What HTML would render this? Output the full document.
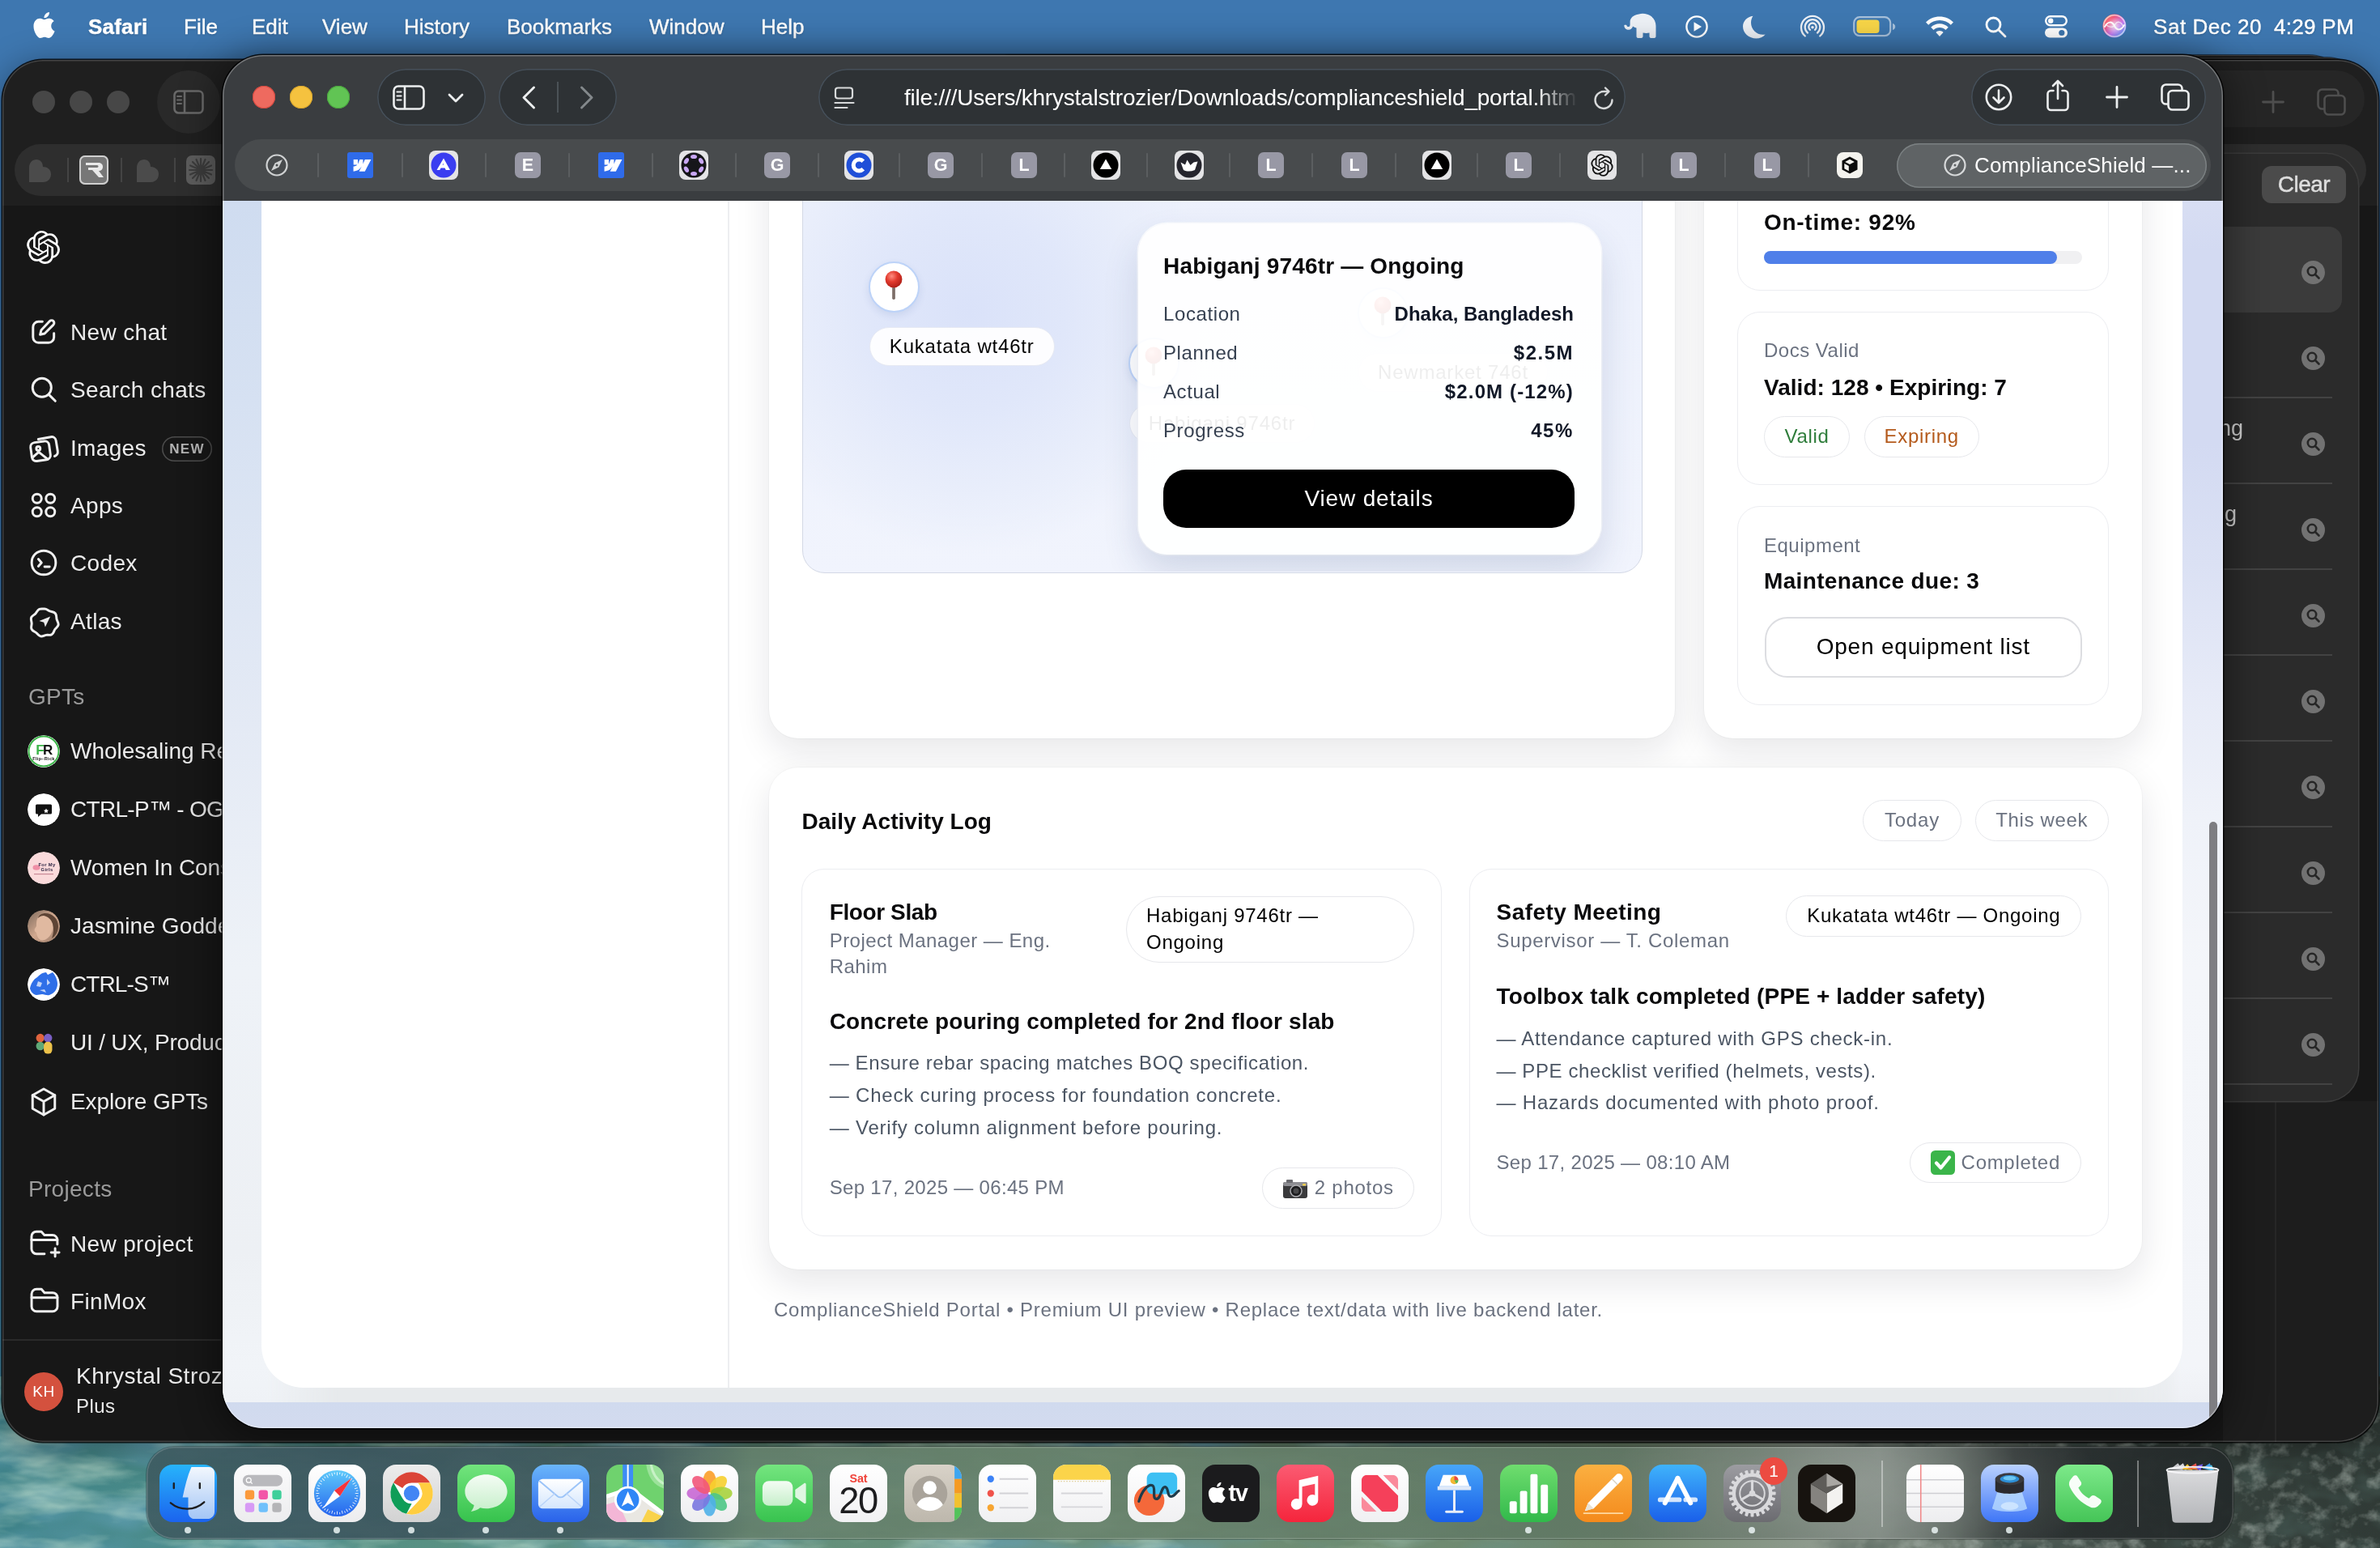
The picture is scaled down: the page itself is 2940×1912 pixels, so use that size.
<!DOCTYPE html>
<html lang="en">
<head>
<meta charset="utf-8">
<title>ComplianceShield — Safari</title>
<style>
*{box-sizing:border-box;margin:0;padding:0}
html,body{width:2940px;height:1912px;overflow:hidden;background:#3e77b0}
body{position:relative;font-family:"Liberation Sans",sans-serif;color:#fff;-webkit-font-smoothing:antialiased}
.abs{position:absolute}
#menubar,#gpt,#saf,#dock{will-change:transform}
svg{display:block;overflow:visible}
/* ---------- wallpaper ---------- */
#wall{position:absolute;left:0;top:0;width:2940px;height:1912px;
 background:
  linear-gradient(180deg,#3e77b0 0,#3e77b0 1200px,#3f7f9a 1700px,#3f8088 1912px)}
/* ---------- menubar ---------- */
#menubar{position:absolute;left:0;top:0;width:2940px;height:66px;font-size:26px;color:#fff}
#menubar span{position:absolute;top:17px;line-height:32px;white-space:pre;text-shadow:0 1px 3px rgba(0,0,0,.22);-webkit-text-stroke:.4px #fff}
/* ---------- chatgpt window ---------- */
#gpt{position:absolute;left:3px;top:74px;width:2935px;height:1707px;border-radius:50px;background:#171717;
 box-shadow:0 0 0 1.500px rgba(0,0,0,.8),0 8px 40px 4px rgba(0,0,0,.35);overflow:hidden}
#gpt .titlebar{position:absolute;left:0;top:0;width:100%;height:180px;background:#1f1f1f}

/* chatgpt */
#gpt .gtl{position:absolute;top:38px;width:28px;height:28px;border-radius:50%;background:#474747}
#gpt .gtab{position:absolute;left:15px;top:104px;width:2905px;height:64px;border-radius:32px;background:#2e2e2e}
#gpt .row{position:absolute;left:0;height:48px;width:272px;font-size:28px;line-height:48px;color:#ececec;letter-spacing:.34px;white-space:pre}
#gpt .row>svg{position:absolute;left:35px;top:7px;transform:scale(1.1);transform-origin:50% 50%}
#gpt .row b{position:absolute;left:84px;top:-.5px;font-weight:400}
#gpt .row .av{position:absolute;left:31px;top:4px;width:40px;height:40px;border-radius:50%;overflow:hidden}
#gpt .lbl{position:absolute;left:32px;font-size:28px;line-height:34px;color:#9b9b9b;letter-spacing:.3px}
#gpt .sico{position:absolute;left:2840px;width:29px;height:29px;border-radius:50%;background:#727272}
#gpt .sdiv{position:absolute;left:2700px;width:178px;height:2px;background:#434343}
/* ---------- safari window ---------- */
#saf{position:absolute;left:275px;top:68px;width:2471px;height:1696px;border-radius:50px;background:#3a3d40;
 box-shadow:0 0 0 1.500px rgba(0,0,0,.85),0 6px 46px 8px rgba(0,0,0,.42);overflow:hidden}
#saf .chrome{position:absolute;left:0;top:0;width:100%;height:180px;background:#3a3d40}
#saf .page{position:absolute;left:0;top:180px;width:100%;height:1516px;overflow:hidden;color:#000;background:linear-gradient(180deg,#e7eaec 0,#e7eaec 1484px,#d0daee 1484px,#d3dbef 1516px)}

/* safari chrome */
#saf .tl{position:absolute;top:38px;width:28px;height:28px;border-radius:50%}
#saf .pill{position:absolute;top:17px;height:70px;border-radius:35px;background:#2e3235;box-shadow:inset 0 0 0 1.5px #46505a}
#saf .tabbar{position:absolute;left:15px;top:104px;width:2441px;height:64px;border-radius:32px;background:#484b4d}
#saf .tabbar i{position:absolute;top:17px;width:2px;height:30px;background:#5b5e60;border-radius:1px}
#saf .fav{position:absolute;top:16px;width:32px;height:32px;border-radius:7px;font-style:normal;font-weight:700;font-size:21.500px;line-height:33px;text-align:center;color:#fff;background:#9898a5}
#saf .favw{position:absolute;top:14px;width:36px;height:36px;border-radius:8px;background:#e4e4e6}
#saf .acttab{position:absolute;left:2068px;top:109px;width:383px;height:55px;border-radius:28px;background:#5f6365;box-shadow:inset 0 0 0 1.5px #7b8082;font-size:26px;line-height:55px;color:#fff;white-space:pre}
.ring{position:absolute;left:0;top:0;width:100%;height:100%;border-radius:50px;pointer-events:none}
/* ---------- dock ---------- */
#dock{position:absolute;left:181px;top:1787px;width:2578px;height:114px;border-radius:34px;
 background:radial-gradient(300px 130px at 2110px 45px,rgba(165,172,166,.5) 0,rgba(120,132,124,0) 100%),linear-gradient(90deg,rgba(62,92,98,.94) 0,rgba(60,86,94,.94) 12%,rgba(66,92,94,.94) 24%,rgba(100,128,108,.93) 29%,rgba(104,130,108,.93) 45%,rgba(96,120,100,.93) 68%,rgba(104,118,106,.94) 78%,rgba(122,132,125,.94) 83%,rgba(92,102,96,.95) 86%,rgba(44,50,50,.97) 89.500%,rgba(36,42,42,.97) 100%);
 box-shadow:inset 0 0 0 1.5px rgba(255,255,255,.16),0 0 0 1px rgba(0,0,0,.25)}
</style>
</head>
<body>
<div id="wall"></div>
<svg class="abs" style="left:0;top:1700px" width="2940" height="212" viewBox="0 0 2940 212" preserveAspectRatio="none">
  <defs>
    <linearGradient id="wg" x1="0" y1="0" x2="1" y2="0">
      <stop offset="0" stop-color="#3f838a"/><stop offset=".07" stop-color="#4a8b88"/><stop offset=".2" stop-color="#5a9182"/><stop offset=".45" stop-color="#6b8f76"/><stop offset=".68" stop-color="#71896f"/><stop offset=".76" stop-color="#8e9a8d"/><stop offset=".84" stop-color="#66726a"/><stop offset=".9" stop-color="#38433e"/><stop offset="1" stop-color="#303a36"/>
    </linearGradient>
    <filter id="water" x="0" y="0" width="100%" height="100%"><feTurbulence type="fractalNoise" baseFrequency="0.009 0.03" numOctaves="4" seed="7" result="n"/><feColorMatrix in="n" type="matrix" values="0 0 0 0 .56  0 0 0 0 .76  0 0 0 0 .63  1.700 0 0 0 -.70"/></filter>
    <filter id="water2" x="0" y="0" width="100%" height="100%"><feTurbulence type="fractalNoise" baseFrequency="0.007 0.02" numOctaves="3" seed="23" result="n"/><feColorMatrix in="n" type="matrix" values="0 0 0 0 .13  0 0 0 0 .36  0 0 0 0 .50  0 1.700 0 0 -.66"/></filter>
    <filter id="rock" x="0" y="0" width="100%" height="100%"><feTurbulence type="fractalNoise" baseFrequency="0.045 0.05" numOctaves="4" seed="11" result="n"/><feColorMatrix in="n" type="matrix" values="0 0 0 0 .42  0 0 0 0 .48  0 0 0 0 .44  1.600 0 0 0 -.780"/></filter>
    <filter id="rock2" x="0" y="0" width="100%" height="100%"><feTurbulence type="fractalNoise" baseFrequency="0.02 0.03" numOctaves="3" seed="5" result="n"/><feColorMatrix in="n" type="matrix" values="0 0 0 0 .05  0 0 0 0 .08  0 0 0 0 .07  0 2.400 0 0 -1.050"/></filter>
    <linearGradient id="fadeL" x1="0" y1="0" x2="1" y2="0"><stop offset="0" stop-color="#fff"/><stop offset=".75" stop-color="#fff"/><stop offset="1" stop-color="#000"/></linearGradient>
    <mask id="mL"><rect width="2000" height="212" fill="url(#fadeL)"/></mask>
    <linearGradient id="fadeR" x1="0" y1="0" x2="1" y2="0"><stop offset="0" stop-color="#000"/><stop offset=".3" stop-color="#fff"/><stop offset="1" stop-color="#fff"/></linearGradient>
    <mask id="mR"><rect x="2200" width="740" height="212" fill="url(#fadeR)"/></mask>
  </defs>
  <rect width="2940" height="212" fill="url(#wg)"/>
  <g mask="url(#mL)"><rect width="2000" height="212" filter="url(#water2)"/><rect width="2000" height="212" filter="url(#water)"/></g>
  <g mask="url(#mR)"><rect x="2200" width="740" height="212" filter="url(#rock2)"/><rect x="2200" width="740" height="212" filter="url(#rock)"/></g>
</svg>
<!-- MENUBAR -->
<div id="menubar">
  <svg class="abs" style="left:41px;top:15px" width="27" height="32" viewBox="0 0 814 1000"><path fill="#fff" d="M788 341c-6 4-108 62-108 190 0 148 130 201 134 202-1 3-21 72-69 142-43 62-88 124-156 124s-86-40-165-40c-77 0-104 41-167 41s-106-57-156-127C43 790 0 663 0 542c0-194 126-297 250-297 66 0 121 43 162 43 39 0 101-46 176-46 28 0 130 3 197 99zM554 159c31-37 53-88 53-139 0-7-1-14-2-20-50 2-110 33-146 75-28 32-55 83-55 135 0 8 1 16 2 18 3 1 8 2 13 2 45 0 102-30 135-71z"/></svg>
  <span style="left:109px;font-weight:700;letter-spacing:.2px">Safari</span>
  <span style="left:227px">File</span>
  <span style="left:311px">Edit</span>
  <span style="left:398px">View</span>
  <span style="left:499px">History</span>
  <span style="left:626px">Bookmarks</span>
  <span style="left:802px">Window</span>
  <span style="left:940px">Help</span>
  <!-- status icons -->
  <svg class="abs" style="left:2005px;top:16px" width="42" height="32" viewBox="0 0 42 32"><path fill="#edf1f6" d="M19.500 1.500c3.500-1 7-.8 10.500.3 6.500 2 10.500 7.500 10.500 14.200v13c0 1.100-.9 2-2 2h-4c-1.100 0-2-.9-2-2v-4.500c-2.600.6-5.400.6-8 0V29c0 1.100-.9 2-2 2h-4c-1.100 0-2-.9-2-2V18.500c-1.700-.3-3.200-1-4.500-2-.6 2.600-2.600 4.300-5.200 4.300-2.900 0-5.300-2.200-5.500-5.100 0-.6.400-1 1-1h1.200c.5 0 .9.300 1 .8.200.9 1 1.600 2 1.600 1.300 0 2.100-1 2.100-2.600V11c0-4.800 4-8.400 10.900-9.500z"/></svg>
  <svg class="abs" style="left:2081px;top:18px" width="30" height="30" viewBox="0 0 30 30"><circle cx="15" cy="15" r="12.6" fill="none" stroke="#fff" stroke-width="2.4"/><path fill="#fff" d="M11.5 9.2v11.6l9.6-5.8z"/></svg>
  <svg class="abs" style="left:2152px;top:18px" width="30" height="30" viewBox="0 0 30 30"><path fill="#edf1f6" d="M13.500 1.800c-1.600 2.400-2.500 5.200-2.500 8.200 0 8.200 6.600 14.800 14.800 14.800 1 0 2-.1 2.900-.3C26 27.800 21.900 29.500 17.500 29.500 8.400 29.500 1 22.900 1 14.800 1 8.200 6.300 2.700 13.500 1.800z"/></svg>
  <svg class="abs" style="left:2223px;top:17px" width="32" height="32" viewBox="0 0 32 32" fill="none" stroke="#edf1f6" stroke-width="2.300" stroke-linecap="round"><path d="M6.800 27.500A14 14 0 1 1 25.200 27.500"/><path d="M10 23.600A9.300 9.300 0 1 1 22 23.600"/><path d="M13 19.800A4.700 4.700 0 1 1 19 19.800"/><circle cx="16" cy="16.800" r="1.800" fill="#edf1f6" stroke="none"/></svg>
  <svg class="abs" style="left:2289px;top:20px" width="54" height="26" viewBox="0 0 54 26"><rect x="1.200" y="1.200" width="45" height="23" rx="7" fill="none" stroke="rgba(255,255,255,.55)" stroke-width="2.2"/><rect x="4.500" y="4.500" width="28" height="16.500" rx="4" fill="#f8d648"/><path d="M49 9v8c2-.6 3.200-2 3.200-4S51 9.600 49 9z" fill="rgba(255,255,255,.55)"/></svg>
  <svg class="abs" style="left:2378px;top:19px" width="36" height="27" viewBox="0 0 36 27"><path fill="#fff" d="M18 1.500c6.600 0 12.600 2.600 17 7l-3.200 3.300C28.300 8.200 23.400 6 18 6S7.700 8.200 4.200 11.800L1 8.500c4.400-4.400 10.400-7 17-7zm0 8.800c4.200 0 8 1.700 10.800 4.500l-3.300 3.300c-1.900-2-4.600-3.200-7.500-3.200s-5.600 1.200-7.500 3.200l-3.300-3.300c2.800-2.800 6.600-4.500 10.800-4.500zm0 8.700c1.800 0 3.400.7 4.600 1.900L18 26l-4.600-5.100c1.200-1.200 2.800-1.900 4.600-1.900z"/></svg>
  <svg class="abs" style="left:2451px;top:19px" width="28" height="28" viewBox="0 0 28 28" fill="none" stroke="#fff" stroke-width="2.800" stroke-linecap="round"><circle cx="11.500" cy="11.500" r="8.500"/><path d="M18 18l8 8"/></svg>
  <svg class="abs" style="left:2526px;top:19px" width="28" height="28" viewBox="0 0 28 28"><rect x="1.200" y="1.200" width="25.600" height="11" rx="5.500" fill="none" stroke="#fff" stroke-width="2.400"/><circle cx="7.200" cy="6.700" r="3.200" fill="#fff"/><rect x="0" y="15.500" width="28" height="12" rx="6" fill="#fff"/><circle cx="20.800" cy="21.500" r="3.600" fill="#3e77b0"/></svg>
  <svg class="abs" style="left:2597px;top:17px" width="30" height="30" viewBox="0 0 30 30"><defs><linearGradient id="siri" x1="0" y1="0" x2="1" y2="1"><stop offset="0" stop-color="#ffa45c"/><stop offset=".3" stop-color="#f4567c"/><stop offset=".6" stop-color="#c47af0"/><stop offset="1" stop-color="#3fb0ff"/></linearGradient><radialGradient id="siri2" cx=".5" cy=".5" r=".5"><stop offset="0" stop-color="#fff" stop-opacity=".75"/><stop offset="1" stop-color="#fff" stop-opacity="0"/></radialGradient></defs><circle cx="15" cy="15" r="14.500" fill="url(#siri)"/><circle cx="15" cy="15" r="11" fill="url(#siri2)"/><circle cx="15" cy="15" r="13.300" fill="none" stroke="rgba(255,255,255,.6)" stroke-width="1.500"/><path d="M3 16c4-7 9-7 12-1s8 6 12-1" fill="none" stroke="#fff" stroke-width="2" stroke-linecap="round"/><path d="M4 13c5 5 10 4 12 0s7-4 10 3" fill="none" stroke="rgba(255,255,255,.7)" stroke-width="1.400" stroke-linecap="round"/></svg>
  <span style="left:2660px;letter-spacing:.55px">Sat Dec 20</span>
  <span style="left:2809px;letter-spacing:.3px">4:29 PM</span>
</div>

<!-- STACKED WINDOWS BEHIND -->
<div class="abs" style="left:1200px;top:68px;width:1702px;height:400px;border-radius:50px;background:#1b1b1b;box-shadow:0 0 0 1px rgba(0,0,0,.5),inset 0 1.500px 0 rgba(255,255,255,.16)"></div>
<div class="abs" style="left:1200px;top:71px;width:1724px;height:400px;border-radius:50px;background:#1d1d1d;box-shadow:0 0 0 1px rgba(0,0,0,.5),inset 0 1.500px 0 rgba(255,255,255,.16)"></div>
<!-- CHATGPT WINDOW -->
<div id="gpt">
  <div class="titlebar">
    <div class="gtl" style="left:37px"></div><div class="gtl" style="left:83px"></div><div class="gtl" style="left:129px"></div>
    <div class="abs" style="left:191px;top:13px;width:78px;height:78px;border-radius:50%;background:#292929"></div>
    <svg class="abs" style="left:211px;top:37px" width="38" height="30" viewBox="0 0 38 30" fill="none" stroke="#686868" stroke-width="2.600"><rect x="1.500" y="1.500" width="35" height="27" rx="5"/><path d="M14 1.500v27"/><path d="M5 8h5M5 12.500h5M5 17h5" stroke-width="2" stroke-linecap="round"/></svg>
    <div class="gtab">
      <svg class="abs" style="left:15px;top:17px" width="32" height="32" viewBox="0 0 32 32"><path fill="#4b4b4b" d="M3 30V12C3 6 7 2 12 2s8 4 8 9c5 0 10 3 10 9s-4 10-10 10z"/></svg>
      <div class="abs" style="left:65px;top:17px;width:2px;height:30px;background:#444"></div>
      <div class="abs" style="left:80px;top:14px;width:36px;height:36px;border-radius:7px;background:#777;box-shadow:inset 0 0 0 2px #cfcfcf"><svg width="36" height="36" viewBox="0 0 36 36"><path fill="#e9e9e9" d="M8 9h15c4 0 6 2 6 5s-2 5-5 5l6 8h-6l-8-9h-5v-3h11c2 0 2-3 0-3H8z"/></svg></div>
      <div class="abs" style="left:131px;top:17px;width:2px;height:30px;background:#444"></div>
      <svg class="abs" style="left:148px;top:17px" width="32" height="32" viewBox="0 0 32 32"><path fill="#4b4b4b" d="M3 30V12C3 6 7 2 12 2s8 4 8 9c5 0 10 3 10 9s-4 10-10 10z"/></svg>
      <div class="abs" style="left:197px;top:17px;width:2px;height:30px;background:#444"></div>
      <div class="abs" style="left:212px;top:14px;width:36px;height:36px;border-radius:7px;background:#5c5c5c"><svg width="36" height="36" viewBox="0 0 36 36" stroke="#3c3c3c" stroke-width="2.200" stroke-linecap="round"><path d="M18 4v28M4 18h28M8 8l20 20M28 8L8 28M12.500 5l11 26M23.500 5l-11 26M5 12.500l26 11M5 23.500l26-11"/></svg></div>
    </div>
    <div class="abs" style="left:2560px;top:13px;width:358px;height:70px;border-radius:35px;background:#262626"></div>
    <svg class="abs" style="left:2791px;top:38px" width="28" height="28" viewBox="0 0 28 28" fill="none" stroke="#4e4e4e" stroke-width="2.800" stroke-linecap="round"><path d="M14 1.500v25M1.500 14h25"/></svg>
    <svg class="abs" style="left:2859px;top:35px" width="36" height="34" viewBox="0 0 36 34" fill="none" stroke="#4e4e4e" stroke-width="2.600" stroke-linejoin="round"><rect x="9.500" y="9" width="25" height="23.500" rx="5"/><path d="M9.500 25.500H6.500a5 5 0 01-5-5v-14a5 5 0 015-5h15a5 5 0 015 5V9"/></svg>
  </div>
  <svg class="abs" style="left:30px;top:211px" width="41" height="41" viewBox="0 0 24 24"><path fill="#fff" d="M22.2819 9.8211a5.9847 5.9847 0 0 0-.5157-4.9108 6.0462 6.0462 0 0 0-6.5098-2.9A6.0651 6.0651 0 0 0 4.9807 4.1818a5.9847 5.9847 0 0 0-3.9977 2.9 6.0462 6.0462 0 0 0 .7427 7.0966 5.98 5.98 0 0 0 .511 4.9107 6.051 6.051 0 0 0 6.5146 2.9001A5.9847 5.9847 0 0 0 13.2599 24a6.0557 6.0557 0 0 0 5.7718-4.2058 5.9894 5.9894 0 0 0 3.9977-2.9001 6.0557 6.0557 0 0 0-.7475-7.0729zm-9.022 12.6081a4.4755 4.4755 0 0 1-2.8764-1.0408l.1419-.0804 4.7783-2.7582a.7948.7948 0 0 0 .3927-.6813v-6.7369l2.02 1.1686a.071.071 0 0 1 .038.052v5.5826a4.504 4.504 0 0 1-4.4945 4.4944zm-9.6607-4.1254a4.4708 4.4708 0 0 1-.5346-3.0137l.142.0852 4.783 2.7582a.7712.7712 0 0 0 .7806 0l5.8428-3.3685v2.3324a.0804.0804 0 0 1-.0332.0615L9.74 19.9502a4.4992 4.4992 0 0 1-6.1408-1.6464zM2.3408 7.8956a4.485 4.485 0 0 1 2.3655-1.9728V11.6a.7664.7664 0 0 0 .3879.6765l5.8144 3.3543-2.0201 1.1685a.0757.0757 0 0 1-.071 0l-4.8303-2.7865A4.504 4.504 0 0 1 2.3408 7.872zm16.5963 3.8558L13.1038 8.364 15.1192 7.2a.0757.0757 0 0 1 .071 0l4.8303 2.7913a4.4944 4.4944 0 0 1-.6765 8.1042v-5.6772a.79.79 0 0 0-.407-.667zm2.0107-3.0231l-.142-.0852-4.7735-2.7818a.7759.7759 0 0 0-.7854 0L9.409 9.2297V6.8974a.0662.0662 0 0 1 .0284-.0615l4.8303-2.7866a4.4992 4.4992 0 0 1 6.6802 4.66zM8.3065 12.863l-2.02-1.1638a.0804.0804 0 0 1-.038-.0567V6.0742a4.4992 4.4992 0 0 1 7.3757-3.4537l-.142.0805L8.704 5.459a.7948.7948 0 0 0-.3927.6813zm1.0976-2.3654l2.602-1.4998 2.6069 1.4998v2.9994l-2.5974 1.4997-2.6067-1.4997Z"/></svg>
  <div class="row" style="top:313px"><svg width="32" height="32" viewBox="0 0 32 32" fill="none" stroke="#f0f0f0" stroke-width="2.700" stroke-linecap="round" stroke-linejoin="round"><path d="M14.500 4.500H10a6 6 0 00-6 6V22a6 6 0 006 6h11.500a6 6 0 006-6v-4.500"/><path d="M22.800 3.800a2.900 2.900 0 014.100 4.100L17 17.800l-5 1.200 1.200-5z"/></svg><b>New chat</b></div>
  <div class="row" style="top:384px"><svg width="32" height="32" viewBox="0 0 32 32" fill="none" stroke="#f0f0f0" stroke-width="2.700" stroke-linecap="round" stroke-linejoin="round"><circle cx="14" cy="14" r="10.500"/><path d="M22 22l7 7"/></svg><b>Search chats</b></div>
  <div class="row" style="top:456px"><svg width="34" height="34" viewBox="0 0 34 34" fill="none" stroke="#f0f0f0" stroke-width="2.700" stroke-linecap="round" stroke-linejoin="round"><rect x="2" y="9.500" width="21" height="21" rx="5" transform="rotate(-8 12 20)"/><path d="M10 6.500l14-2.500a5 5 0 015.800 4l2 12a5 5 0 01-3.500 5.600"/><circle cx="10" cy="17" r="2.200"/><path d="M3.500 27l7-6 10 8"/></svg><b>Images</b><span style="position:absolute;left:197px;top:9px;width:62px;height:31px;border-radius:16px;box-shadow:inset 0 0 0 1.500px #4d4d4d;font-size:17px;line-height:31px;text-align:center;color:#b4b4b4;font-weight:700;letter-spacing:1.200px">NEW</span></div>
  <div class="row" style="top:527px"><svg width="32" height="32" viewBox="0 0 32 32" fill="none" stroke="#f0f0f0" stroke-width="2.700" stroke-linecap="round" stroke-linejoin="round"><circle cx="8.500" cy="8.500" r="5"/><circle cx="23.500" cy="8.500" r="5"/><circle cx="8.500" cy="23.500" r="5"/><circle cx="23.500" cy="23.500" r="5"/></svg><b>Apps</b></div>
  <div class="row" style="top:598px"><svg width="32" height="32" viewBox="0 0 32 32" fill="none" stroke="#f0f0f0" stroke-width="2.700" stroke-linecap="round" stroke-linejoin="round"><path d="M16 2.500c7.500 0 13.500 5.500 13.500 13.500S23.500 29.500 16 29.500 2.500 24 2.500 16 8.500 2.500 16 2.500z"/><path d="M10 12l3.500 4-3.500 4M17 20.500h5.500"/></svg><b>Codex</b></div>
  <div class="row" style="top:670px"><svg width="34" height="34" viewBox="0 0 34 34" fill="none" stroke="#f0f0f0" stroke-width="2.700" stroke-linecap="round" stroke-linejoin="round"><path d="M17 2.500c2.500 0 4 1.800 6 2.600s4.600.6 6.200 2.600.9 4.300 1.500 6.500 2.300 4 1.800 6.300-2.700 3.300-3.900 5.200-1.400 4.400-3.500 5.600-4.200.2-6.300.6-3.900 2-6.200 1.400-3.300-2.800-5.100-4.100-4.200-1.900-5.100-4.100.3-4.200.2-6.400S1.200 14 2.200 12s3.400-2.700 4.800-4.300 2-4.100 4.200-4.900 3.400-.3 5.800-.3z"/><path fill="#ececec" stroke="none" d="M23.500 11L11 16.200l5.300 1.500 1.500 5.300z"/></svg><b>Atlas</b></div>
  <div class="lbl" style="top:770px">GPTs</div>
  <div class="row" style="top:830px"><div class="av"><svg width="40" height="40" viewBox="0 0 40 40"><circle cx="20" cy="20" r="20" fill="#fff"/><circle cx="20" cy="20" r="18.500" fill="none" stroke="#3db54a" stroke-width="2"/><text x="20" y="24" font-size="17" font-weight="700" text-anchor="middle" fill="#111" font-family="Liberation Sans,sans-serif" letter-spacing="-1.500"><tspan fill="#3db54a">F</tspan>R</text><text x="20" y="31" font-size="5.500" font-weight="700" text-anchor="middle" fill="#111" font-family="Liberation Sans,sans-serif">Flip–Rick</text></svg></div><b style="letter-spacing:0px">Wholesaling Real Estate</b></div>
  <div class="row" style="top:902px"><div class="av"><svg width="40" height="40" viewBox="0 0 40 40"><circle cx="20" cy="20" r="20" fill="#fff"/><path fill="#111" d="M11.500 13.500h17a1.500 1.500 0 011.500 1.500v9a1.500 1.500 0 01-1.500 1.500H17l-4 3.500v-3.500h-1.500A1.500 1.500 0 0110 24v-9a1.500 1.500 0 011.500-1.500z"/><path fill="#fff" d="M23 18.500l1 2 2 .3-1.500 1.400.4 2-1.900-1-1.900 1 .4-2-1.500-1.400 2-.3z"/></svg></div><b style="letter-spacing:-0.7px">CTRL-P™ - OG Prompt</b></div>
  <div class="row" style="top:974px"><div class="av"><svg width="40" height="40" viewBox="0 0 40 40"><circle cx="20" cy="20" r="20" fill="#fadadb"/><ellipse cx="11" cy="19.500" rx="4.500" ry="3.200" fill="#ef8fa6"/><text x="24" y="18" font-size="5.800" font-weight="700" text-anchor="middle" fill="#2b2342" font-family="Liberation Sans,sans-serif">For My</text><text x="24" y="24" font-size="5.800" font-weight="700" text-anchor="middle" fill="#2b2342" font-family="Liberation Sans,sans-serif">Girls</text><rect x="8" y="27" width="24" height="1.200" fill="#c98b98"/></svg></div><b style="letter-spacing:-0.1px">Women In Construction</b></div>
  <div class="row" style="top:1046px"><div class="av"><svg width="40" height="40" viewBox="0 0 40 40"><defs><linearGradient id="jas" x1="0" y1="0" x2="1" y2="1"><stop offset="0" stop-color="#7d6a5c"/><stop offset=".5" stop-color="#cfa78e"/><stop offset="1" stop-color="#9b7b69"/></linearGradient></defs><circle cx="20" cy="20" r="20" fill="url(#jas)"/><path fill="#e0b9a0" d="M14 8c7-4 16 0 17 8s-1 16-8 20-11-1-12-8c-2-1-3-3-2-5l2-3c0-5 0-9 3-12z"/><path fill="#5d4435" d="M22 4c9 0 16 7 16 16 0 6-3 12-8 15 2-6 3-12 1-18s-6-9-11-10c-3 0-5 1-7 3 1-4 5-6 9-6z"/></svg></div><b style="letter-spacing:0.1px">Jasmine Goddess</b></div>
  <div class="row" style="top:1118px"><div class="av"><svg width="40" height="40" viewBox="0 0 40 40"><circle cx="20" cy="20" r="20" fill="#fff"/><path fill="#2f6fe8" d="M3 25c1-6 4-11 9-14 2-2 6-6 11-6l2 3 6-3c3 3 6 9 6 14 0 7-4 12-10 14-3 1-6-1-9-1s-7 2-10 0-4-4-5-7z"/><path fill="#fff" d="M13 16l5 2-2 5-5-1zM24 13l4 5-4 3zM15 27l6-1 2 4z" opacity=".7"/></svg></div><b style="letter-spacing:-0.9px">CTRL-S™</b></div>
  <div class="row" style="top:1190px"><svg style="left:41px;top:12px;transform:none" width="21" height="26" viewBox="0 0 24 30"><circle cx="6.500" cy="7" r="6" fill="#e0643e"/><circle cx="17.500" cy="7" r="6" fill="#7a5fc4"/><circle cx="6.500" cy="18.500" r="6" fill="#5fa877"/><rect x="11.500" y="12.500" width="12" height="17" rx="5.500" fill="#ecc24a"/></svg><b style="letter-spacing:-0.2px">UI / UX, Product Design</b></div>
  <div class="row" style="top:1263px"><svg width="32" height="34" viewBox="0 0 32 34" fill="none" stroke="#f0f0f0" stroke-width="2.700" stroke-linecap="round" stroke-linejoin="round"><path d="M16 2.500l12.500 7v15L16 31.500l-12.500-7v-15z"/><path d="M3.500 9.500L16 16.500l12.500-7M16 16.500v15"/></svg><b style="letter-spacing:-0.1px">Explore GPTs</b></div>
  <div class="lbl" style="top:1378px">Projects</div>
  <div class="row" style="top:1439px"><svg width="36" height="32" viewBox="0 0 36 32" fill="none" stroke="#f0f0f0" stroke-width="2.700" stroke-linecap="round" stroke-linejoin="round"><path d="M17 27.500H8a5.500 5.500 0 01-5.500-5.500V8A5.500 5.500 0 018 2.500h5.500l3.500 4h9A5.500 5.500 0 0131.500 12v5"/><path d="M2.500 12h29"/><path d="M29 21.500v9M24.500 26h9"/></svg><b>New project</b></div>
  <div class="row" style="top:1510px"><svg width="34" height="30" viewBox="0 0 34 30" fill="none" stroke="#f0f0f0" stroke-width="2.700" stroke-linecap="round" stroke-linejoin="round"><path d="M2.500 8A5.500 5.500 0 018 2.500h5.500l3.500 4h9A5.500 5.500 0 0131.500 12v10a5.500 5.500 0 01-5.500 5.500H8A5.500 5.500 0 012.500 22z"/><path d="M2.500 12h29"/></svg><b>FinMox</b></div>
  <div class="abs" style="left:0;top:1580px;width:272px;height:2px;background:#2a2a2a"></div>
  <div class="abs" style="left:27px;top:1621px;width:48px;height:48px;border-radius:50%;background:#d4513e;color:#fff;font-size:19px;line-height:48px;text-align:center;letter-spacing:.5px">KH</div>
  <div class="abs" style="left:91px;top:1609px;font-size:28px;line-height:34px;color:#ececec;letter-spacing:.5px;white-space:pre">Khrystal Strozier</div>
  <div class="abs" style="left:91px;top:1648px;font-size:24px;line-height:30px;color:#ececec;letter-spacing:.4px">Plus</div>
  <div class="abs" style="left:2743px;top:1286px;width:195px;height:430px;background:#1d1d1d"></div>
  <div class="abs" style="left:2807px;top:1286px;width:2px;height:430px;background:#262626"></div>
  <div class="abs" style="left:2500px;top:116px;width:2410px;margin-left:-2000px;height:1170px;border-radius:40px;background:#2b2b2b;box-shadow:0 0 0 1.500px #3c3c3c"></div>
  <div class="abs" style="left:2700px;top:206px;width:190px;height:106px;border-radius:16px;background:#3b3b3b"></div>
  <div class="abs" style="left:2791px;top:131px;width:104px;height:46px;border-radius:12px;background:#4b4b4b;font-size:28px;line-height:46px;text-align:center;color:#dedede;letter-spacing:-.5px;-webkit-text-stroke:.5px #dedede">Clear</div>
  <div class="abs" style="left:2738px;top:438px;font-size:27px;line-height:34px;color:#d0d0d0">ng</div>
  <div class="abs" style="left:2745px;top:544px;font-size:27px;line-height:34px;color:#d0d0d0">g</div>
  <div class="sico" style="top:247.5px"><svg width="29" height="29" viewBox="0 0 29 29" fill="none" stroke="#262626" stroke-width="2.600" stroke-linecap="round"><circle cx="13" cy="13" r="5.200"/><path d="M17 17l4.500 4.500"/></svg></div>
  <div class="sico" style="top:353.5px"><svg width="29" height="29" viewBox="0 0 29 29" fill="none" stroke="#262626" stroke-width="2.600" stroke-linecap="round"><circle cx="13" cy="13" r="5.200"/><path d="M17 17l4.500 4.500"/></svg></div>
  <div class="sico" style="top:459.5px"><svg width="29" height="29" viewBox="0 0 29 29" fill="none" stroke="#262626" stroke-width="2.600" stroke-linecap="round"><circle cx="13" cy="13" r="5.200"/><path d="M17 17l4.500 4.500"/></svg></div>
  <div class="sico" style="top:565.5px"><svg width="29" height="29" viewBox="0 0 29 29" fill="none" stroke="#262626" stroke-width="2.600" stroke-linecap="round"><circle cx="13" cy="13" r="5.200"/><path d="M17 17l4.500 4.500"/></svg></div>
  <div class="sico" style="top:671.5px"><svg width="29" height="29" viewBox="0 0 29 29" fill="none" stroke="#262626" stroke-width="2.600" stroke-linecap="round"><circle cx="13" cy="13" r="5.200"/><path d="M17 17l4.500 4.500"/></svg></div>
  <div class="sico" style="top:777.5px"><svg width="29" height="29" viewBox="0 0 29 29" fill="none" stroke="#262626" stroke-width="2.600" stroke-linecap="round"><circle cx="13" cy="13" r="5.200"/><path d="M17 17l4.500 4.500"/></svg></div>
  <div class="sico" style="top:883.5px"><svg width="29" height="29" viewBox="0 0 29 29" fill="none" stroke="#262626" stroke-width="2.600" stroke-linecap="round"><circle cx="13" cy="13" r="5.200"/><path d="M17 17l4.500 4.500"/></svg></div>
  <div class="sico" style="top:989.5px"><svg width="29" height="29" viewBox="0 0 29 29" fill="none" stroke="#262626" stroke-width="2.600" stroke-linecap="round"><circle cx="13" cy="13" r="5.200"/><path d="M17 17l4.500 4.500"/></svg></div>
  <div class="sico" style="top:1095.5px"><svg width="29" height="29" viewBox="0 0 29 29" fill="none" stroke="#262626" stroke-width="2.600" stroke-linecap="round"><circle cx="13" cy="13" r="5.200"/><path d="M17 17l4.500 4.500"/></svg></div>
  <div class="sico" style="top:1201.5px"><svg width="29" height="29" viewBox="0 0 29 29" fill="none" stroke="#262626" stroke-width="2.600" stroke-linecap="round"><circle cx="13" cy="13" r="5.200"/><path d="M17 17l4.500 4.500"/></svg></div>
  <div class="sdiv" style="top:416px"></div>
  <div class="sdiv" style="top:522px"></div>
  <div class="sdiv" style="top:628px"></div>
  <div class="sdiv" style="top:734px"></div>
  <div class="sdiv" style="top:840px"></div>
  <div class="sdiv" style="top:946px"></div>
  <div class="sdiv" style="top:1052px"></div>
  <div class="sdiv" style="top:1158px"></div>
  <div class="sdiv" style="top:1264px"></div>
  <div class="ring" style="box-shadow:inset 0 0 0 1.500px rgba(255,255,255,.17)"></div>
</div>

<!-- SAFARI WINDOW -->
<div id="saf">
  <div class="chrome">
    <div class="tl" style="left:37px;background:#ee6a5f;box-shadow:inset 0 0 0 1px #d5483f"></div>
    <div class="tl" style="left:83px;background:#f5c23f;box-shadow:inset 0 0 0 1px #d9a62c"></div>
    <div class="tl" style="left:129px;background:#61c454;box-shadow:inset 0 0 0 1px #4ba63f"></div>
    <div class="pill" style="left:191px;width:134px">
      <svg class="abs" style="left:19px;top:20px" width="40" height="31" viewBox="0 0 40 31" fill="none" stroke="#eceeef" stroke-width="2.600"><rect x="1.500" y="1.500" width="37" height="28" rx="5.500"/><path d="M15 1.500v28"/><path d="M5.500 8.500h5M5.500 13.500h5M5.500 18.500h5" stroke-width="2.200" stroke-linecap="round"/></svg>
      <svg class="abs" style="left:87px;top:30px" width="20" height="12" viewBox="0 0 20 12" fill="none" stroke="#eceeef" stroke-width="2.800" stroke-linecap="round" stroke-linejoin="round"><path d="M2 2l8 8 8-8"/></svg>
    </div>
    <div class="pill" style="left:341px;width:146px">
      <svg class="abs" style="left:28px;top:21px" width="18" height="29" viewBox="0 0 18 29" fill="none" stroke="#eceeef" stroke-width="3" stroke-linecap="round" stroke-linejoin="round"><path d="M15.500 2L3 14.500 15.500 27"/></svg>
      <div class="abs" style="left:72px;top:16px;width:1.500px;height:38px;background:#4b5257"></div>
      <svg class="abs" style="left:100px;top:21px" width="18" height="29" viewBox="0 0 18 29" fill="none" stroke="#83888b" stroke-width="3" stroke-linecap="round" stroke-linejoin="round"><path d="M2.500 2L15 14.500 2.500 27"/></svg>
    </div>
    <div class="pill" style="left:736px;width:997px">
      <svg class="abs" style="left:19px;top:22px" width="26" height="28" viewBox="0 0 26 28" fill="none" stroke="#d7d9da" stroke-width="2.200" stroke-linecap="round"><rect x="2" y="1.500" width="21" height="13" rx="3"/><path d="M1.500 20h23M1.500 26h15"/></svg>
      <div class="abs" style="left:106px;top:0;width:850px;height:70px;line-height:72px;font-size:28px;letter-spacing:-.22px;color:#fff;white-space:pre;overflow:hidden;-webkit-mask-image:linear-gradient(90deg,#000 0,#000 780px,transparent 832px);mask-image:linear-gradient(90deg,#000 0,#000 780px,transparent 832px)">file:///Users/khrystalstrozier/Downloads/complianceshield_portal.html</div>
      <svg class="abs" style="left:957px;top:21px" width="26" height="30" viewBox="0 0 26 30" fill="none" stroke="#d7d9da" stroke-width="2.400" stroke-linecap="round" stroke-linejoin="round"><path d="M23.500 17.500A10.500 10.500 0 1113 7h6"/><path d="M15 2.500L19.500 7 15 11.500"/></svg>
    </div>
    <div class="pill" style="left:2160px;width:290px">
      <svg class="abs" style="left:17px;top:18px" width="34" height="34" viewBox="0 0 34 34" fill="none" stroke="#eceeef" stroke-width="2.600" stroke-linecap="round" stroke-linejoin="round"><circle cx="17" cy="17" r="15.200"/><path d="M17 8.500v15M10.500 17.500L17 24l6.500-6.500"/></svg>
      <svg class="abs" style="left:92px;top:13px" width="30" height="40" viewBox="0 0 30 40" fill="none" stroke="#eceeef" stroke-width="2.600" stroke-linecap="round" stroke-linejoin="round"><path d="M9.500 14H6.500a4 4 0 00-4 4v16a4 4 0 004 4h17a4 4 0 004-4V18a4 4 0 00-4-4h-3"/><path d="M15 24V2.500M9 8l6-6 6 6"/></svg>
      <svg class="abs" style="left:166px;top:21px" width="28" height="28" viewBox="0 0 28 28" fill="none" stroke="#eceeef" stroke-width="2.800" stroke-linecap="round"><path d="M14 1.500v25M1.500 14h25"/></svg>
      <svg class="abs" style="left:234px;top:18px" width="36" height="34" viewBox="0 0 36 34" fill="none" stroke="#eceeef" stroke-width="2.600" stroke-linejoin="round"><rect x="9.500" y="9" width="25" height="23.500" rx="5"/><path d="M9.500 25.500H6.500a5 5 0 01-5-5v-14a5 5 0 015-5h15a5 5 0 015 5V9"/></svg>
    </div>
    <div class="tabbar"><i style="left:102px"></i><i style="left:206px"></i><i style="left:309px"></i><i style="left:412px"></i><i style="left:515px"></i><i style="left:618px"></i><i style="left:720px"></i><i style="left:820px"></i><i style="left:922px"></i><i style="left:1024px"></i><i style="left:1126px"></i><i style="left:1228px"></i><i style="left:1330px"></i><i style="left:1433px"></i><i style="left:1534px"></i><i style="left:1636px"></i><i style="left:1738px"></i><i style="left:1840px"></i><i style="left:1943px"></i><svg class="abs" style="left:38px;top:18px" width="28" height="28" viewBox="0 0 28 28"><circle cx="14" cy="14" r="12.500" fill="none" stroke="#d0d2d3" stroke-width="2.200"/><path fill="#d0d2d3" d="M21 7l-4.600 9.400L7 21l4.600-9.400zM14 12.500a1.500 1.500 0 100 3 1.500 1.500 0 000-3z" fill-rule="evenodd"/></svg><div class="fav" style="left:139px;background:#2f6bea;border-radius:3px"><svg width="32" height="32" viewBox="3.500 3.500 25 25"><path fill="#fff" d="M26.500 10.500l-6 11.500h-5.600l2.500-4.800c-1.800 3-4.200 4.600-8 4.800v-4.700s2.300-.1 3.700-1.600H9.500v-5.200h4.200v4.300l.1 0 1.700-4.300h3.200v4.300l0 0 1.800-4.300z"/></svg></div><div class="favw" style="left:240px"><svg width="36" height="36" viewBox="0 0 36 36"><circle cx="18" cy="18" r="15.500" fill="#3a3df0"/><path fill="#fff" d="M18 9.500l8 14.500h-5.200l-1.300-2.600h-5l2-3.600h1.200L18 15.200 13.200 24H9.500z"/></svg></div><em class="fav" style="left:346px">E</em><div class="fav" style="left:449px;background:#2f6bea;border-radius:3px"><svg width="32" height="32" viewBox="3.500 3.500 25 25"><path fill="#fff" d="M26.500 10.500l-6 11.500h-5.600l2.500-4.800c-1.800 3-4.200 4.600-8 4.800v-4.700s2.300-.1 3.700-1.600H9.500v-5.200h4.200v4.300l.1 0 1.700-4.300h3.200v4.300l0 0 1.800-4.300z"/></svg></div><div class="favw" style="left:549px"><svg width="36" height="36" viewBox="0 0 36 36"><circle cx="18" cy="18" r="15.500" fill="#16161a"/><g fill="#c9a7f5"><ellipse cx="18" cy="7.500" rx="4" ry="2.600"/><ellipse cx="18" cy="28.500" rx="4" ry="2.600"/><ellipse cx="8.900" cy="12.700" rx="4" ry="2.600" transform="rotate(-60 8.900 12.700)"/><ellipse cx="27.100" cy="12.700" rx="4" ry="2.600" transform="rotate(60 27.100 12.700)"/><ellipse cx="8.900" cy="23.300" rx="4" ry="2.600" transform="rotate(60 8.900 23.300)"/><ellipse cx="27.100" cy="23.300" rx="4" ry="2.600" transform="rotate(-60 27.100 23.300)"/></g></svg></div><em class="fav" style="left:654px">G</em><div class="favw" style="left:753px"><svg width="36" height="36" viewBox="0 0 36 36"><circle cx="18" cy="18" r="15.500" fill="#1f4fd8"/><path fill="none" stroke="#fff" stroke-width="5" d="M23.300 13.200A7 7 0 1023.300 22.800"/></svg></div><em class="fav" style="left:856px">G</em><em class="fav" style="left:959px">L</em><div class="favw" style="left:1058px"><svg width="36" height="36" viewBox="0 0 36 36"><circle cx="18" cy="18" r="15.500" fill="#000"/><path fill="#fff" d="M18 10.500l7.200 12.500H10.800z"/></svg></div><div class="favw" style="left:1161px"><svg width="36" height="36" viewBox="0 0 36 36"><circle cx="18" cy="18" r="15.500" fill="#25252d"/><path fill="#fff" d="M7.500 14.500l5.500 3 2.500-6 4 6.500 4-3.500 5-1-3.500 10.500c-5 2-10 2-14 0z"/></svg></div><em class="fav" style="left:1264px">L</em><em class="fav" style="left:1367px">L</em><div class="favw" style="left:1467px"><svg width="36" height="36" viewBox="0 0 36 36"><circle cx="18" cy="18" r="15.500" fill="#000"/><path fill="#fff" d="M18 10.500l7.200 12.500H10.800z"/></svg></div><em class="fav" style="left:1570px">L</em><div class="favw" style="left:1671px"><svg width="36" height="36" viewBox="-3.800 -3.800 31.600 31.600"><path fill="#111" d="M22.2819 9.8211a5.9847 5.9847 0 0 0-.5157-4.9108 6.0462 6.0462 0 0 0-6.5098-2.9A6.0651 6.0651 0 0 0 4.9807 4.1818a5.9847 5.9847 0 0 0-3.9977 2.9 6.0462 6.0462 0 0 0 .7427 7.0966 5.98 5.98 0 0 0 .511 4.9107 6.051 6.051 0 0 0 6.5146 2.9001A5.9847 5.9847 0 0 0 13.2599 24a6.0557 6.0557 0 0 0 5.7718-4.2058 5.9894 5.9894 0 0 0 3.9977-2.9001 6.0557 6.0557 0 0 0-.7475-7.0729zm-9.022 12.6081a4.4755 4.4755 0 0 1-2.8764-1.0408l.1419-.0804 4.7783-2.7582a.7948.7948 0 0 0 .3927-.6813v-6.7369l2.02 1.1686a.071.071 0 0 1 .038.052v5.5826a4.504 4.504 0 0 1-4.4945 4.4944zm-9.6607-4.1254a4.4708 4.4708 0 0 1-.5346-3.0137l.142.0852 4.783 2.7582a.7712.7712 0 0 0 .7806 0l5.8428-3.3685v2.3324a.0804.0804 0 0 1-.0332.0615L9.74 19.9502a4.4992 4.4992 0 0 1-6.1408-1.6464zM2.3408 7.8956a4.485 4.485 0 0 1 2.3655-1.9728V11.6a.7664.7664 0 0 0 .3879.6765l5.8144 3.3543-2.0201 1.1685a.0757.0757 0 0 1-.071 0l-4.8303-2.7865A4.504 4.504 0 0 1 2.3408 7.872zm16.5963 3.8558L13.1038 8.364 15.1192 7.2a.0757.0757 0 0 1 .071 0l4.8303 2.7913a4.4944 4.4944 0 0 1-.6765 8.1042v-5.6772a.79.79 0 0 0-.407-.667zm2.0107-3.0231l-.142-.0852-4.7735-2.7818a.7759.7759 0 0 0-.7854 0L9.409 9.2297V6.8974a.0662.0662 0 0 1 .0284-.0615l4.8303-2.7866a4.4992 4.4992 0 0 1 6.6802 4.66zM8.3065 12.863l-2.02-1.1638a.0804.0804 0 0 1-.038-.0567V6.0742a4.4992 4.4992 0 0 1 7.3757-3.4537l-.142.0805L8.704 5.459a.7948.7948 0 0 0-.3927.6813zm1.0976-2.3654l2.602-1.4998 2.6069 1.4998v2.9994l-2.5974 1.4997-2.6067-1.4997Z"/></svg></div><em class="fav" style="left:1774px">L</em><em class="fav" style="left:1877px">L</em><div class="favw" style="left:1979px;top:16px;width:32px;height:32px;background:#f4f3ee"><svg width="32" height="32" viewBox="0 0 32 32"><path fill="#0d0d0d" d="M16 5.500l9.500 5v11l-9.500 5-9.500-5v-11z"/><path fill="#f4f3ee" d="M16 8.800l5.800 3.100L16 15l-5.800-3.100zM9.300 14l5.500 2.900v6.300l-5.500-2.900z"/></svg></div></div>
    <div class="acttab"><svg class="abs" style="left:58px;top:13px" width="28" height="28" viewBox="0 0 28 28"><circle cx="14" cy="14" r="12.500" fill="none" stroke="#d8dadb" stroke-width="2.200"/><path fill="#d8dadb" d="M21 7l-4.600 9.400L7 21l4.600-9.400zM14 12.500a1.500 1.500 0 100 3 1.500 1.500 0 000-3z" fill-rule="evenodd"/></svg><span style="position:absolute;left:96px;top:0;letter-spacing:.15px">ComplianceShield —...</span></div>
  </div>
  <div class="page">
    <!--PAGE-->
    <div class="abs " style="left:0px;top:0px;width:145px;height:1484px;background:linear-gradient(180deg,#cfdcf0 0,#d6e1f2 250px,#e4eaf5 650px,#eef2f7 950px,#edf0f4 1300px,#f1f4f8 1440px,#eff2f6 1484px);-webkit-mask-image:linear-gradient(90deg,#000 0,#000 52px,transparent 145px);mask-image:linear-gradient(90deg,#000 0,#000 52px,transparent 145px);"></div>
    <div class="abs " style="left:2325px;top:0px;width:146px;height:1484px;background:linear-gradient(180deg,#d8def3 0,#d3daf2 60px,#d3daf2 300px,#dbe1f4 450px,#e6eaf7 600px,#eff2f9 760px,#f4f6fa 950px,#f3f5f9 1440px,#eef0f4 1484px);-webkit-mask-image:linear-gradient(270deg,#000 0,#000 50px,rgba(0,0,0,.5) 70px,transparent 146px);mask-image:linear-gradient(270deg,#000 0,#000 50px,rgba(0,0,0,.5) 70px,transparent 146px);"></div>
    <div class="abs " style="left:48px;top:-148px;width:2373px;height:1614px;background:#fff;border-radius:52px;"></div>
    <div class="abs " style="left:623.5px;top:-8px;width:2.0px;height:1474px;background:#edeef1;"></div>
    <div class="abs " style="left:675px;top:-148px;width:1119px;height:812px;background:#fff;border-radius:36px;box-shadow:0 16px 44px rgba(15,23,42,.10),0 0 0 1px rgba(15,23,42,.025);"></div>
    <div class="abs " style="left:1830px;top:-148px;width:541px;height:812px;background:#fff;border-radius:36px;box-shadow:0 16px 44px rgba(15,23,42,.10),0 0 0 1px rgba(15,23,42,.025);"></div>
    <div class="abs " style="left:675px;top:699.5px;width:1696px;height:620.5px;background:#fff;border-radius:36px;box-shadow:0 16px 44px rgba(15,23,42,.10),0 0 0 1px rgba(15,23,42,.025);"></div>
    <div class="abs " style="left:716px;top:-148px;width:1037.5px;height:607.5px;border-radius:28px;border:1.5px solid #d3d8e5;background:radial-gradient(circle 300px at 205px 285px,#dae2f9 0,#e0e7fa 40%,#e9eefb 75%,rgba(237,241,252,0) 100%),linear-gradient(180deg,#ecf0fc 0,#edf1fc 45%,#f1f4fd 100%);"></div>
    <div class="abs " style="left:797.5px;top:74.5px;width:63.0px;height:63.0px;border-radius:50%;background:#fff;border:2px solid #bdd3f8;box-shadow:0 4px 10px rgba(60,90,160,.12);"><svg width="24" height="37" viewBox="0 0 22 34" style="position:absolute;left:17.500px;top:9px"><defs><radialGradient id="pinh" cx=".38" cy=".32" r=".75"><stop offset="0" stop-color="#ff8d80"/><stop offset=".45" stop-color="#e23a2e"/><stop offset="1" stop-color="#a81b14"/></radialGradient></defs><rect x="9.300" y="15" width="3.400" height="18" rx="1.500" fill="#7d6e68"/><circle cx="11" cy="10" r="9.600" fill="url(#pinh)"/></svg></div>
    <div class="abs " style="left:799px;top:156px;width:228.5px;height:48px;border-radius:24px;background:rgba(255,255,255,.92);border:1.5px solid #e6e9f3;font-size:24px;line-height:45px;text-align:center;color:#000;letter-spacing:0.8px;white-space:pre;">Kukatata wt46tr</div>
    <div class="abs " style="left:1401.5px;top:106.5px;width:63.0px;height:63.0px;border-radius:50%;background:#fff;border:2px solid #bdd3f8;box-shadow:0 4px 10px rgba(60,90,160,.12);"><svg width="24" height="37" viewBox="0 0 22 34" style="position:absolute;left:17.500px;top:9px"><defs><radialGradient id="pinh2" cx=".38" cy=".32" r=".75"><stop offset="0" stop-color="#ff8d80"/><stop offset=".45" stop-color="#e23a2e"/><stop offset="1" stop-color="#a81b14"/></radialGradient></defs><rect x="9.300" y="15" width="3.400" height="18" rx="1.500" fill="#7d6e68"/><circle cx="11" cy="10" r="9.600" fill="url(#pinh2)"/></svg></div>
    <div class="abs " style="left:1403px;top:188px;width:234px;height:48px;border-radius:24px;background:rgba(255,255,255,.92);border:1.5px solid #e6e9f3;font-size:24px;line-height:45px;text-align:center;color:#000;letter-spacing:0.8px;white-space:pre;">Newmarket 746t</div>
    <div class="abs " style="left:1118.5px;top:168.5px;width:63.0px;height:63.0px;border-radius:50%;background:#fff;border:2px solid #bdd3f8;box-shadow:0 4px 10px rgba(60,90,160,.12);"><svg width="24" height="37" viewBox="0 0 22 34" style="position:absolute;left:17.500px;top:9px"><defs><radialGradient id="pinh3" cx=".38" cy=".32" r=".75"><stop offset="0" stop-color="#ff8d80"/><stop offset=".45" stop-color="#e23a2e"/><stop offset="1" stop-color="#a81b14"/></radialGradient></defs><rect x="9.300" y="15" width="3.400" height="18" rx="1.500" fill="#7d6e68"/><circle cx="11" cy="10" r="9.600" fill="url(#pinh3)"/></svg></div>
    <div class="abs " style="left:1120px;top:251px;width:229px;height:48px;border-radius:24px;background:rgba(255,255,255,.92);border:1.5px solid #e6e9f3;font-size:24px;line-height:45px;text-align:center;color:#000;letter-spacing:0.8px;white-space:pre;">Habiganj 9746tr</div>
    <div class="abs " style="left:1130.5px;top:27.5px;width:572.0px;height:409.5px;border-radius:36px;background:rgba(255,255,255,.935);box-shadow:0 22px 44px rgba(40,60,120,.16),0 0 0 1.5px rgba(255,255,255,.85);clip-path:inset(-70px -50px -21px -70px);"></div>
    <div class="abs" style="left:1162px;top:63.1px;font-size:28px;line-height:35px;font-weight:700;color:#0a0a0c;letter-spacing:0.18px;white-space:pre;">Habiganj 9746tr — Ongoing</div>
    <div class="abs" style="left:1162px;top:124.7px;font-size:24px;line-height:30px;font-weight:400;color:#374151;letter-spacing:0.6px;white-space:pre;">Location</div>
    <div class="abs" style="right:802px;top:124.7px;font-size:24px;line-height:30px;font-weight:700;color:#111827;letter-spacing:0px;white-space:pre;">Dhaka, Bangladesh</div>
    <div class="abs" style="left:1162px;top:172.7px;font-size:24px;line-height:30px;font-weight:400;color:#374151;letter-spacing:0.6px;white-space:pre;">Planned</div>
    <div class="abs" style="right:802px;top:172.7px;font-size:24px;line-height:30px;font-weight:700;color:#111827;letter-spacing:1.5px;white-space:pre;">$2.5M</div>
    <div class="abs" style="left:1162px;top:220.7px;font-size:24px;line-height:30px;font-weight:400;color:#374151;letter-spacing:0.6px;white-space:pre;">Actual</div>
    <div class="abs" style="right:802px;top:220.7px;font-size:24px;line-height:30px;font-weight:700;color:#111827;letter-spacing:1.15px;white-space:pre;">$2.0M (-12%)</div>
    <div class="abs" style="left:1162px;top:268.7px;font-size:24px;line-height:30px;font-weight:400;color:#374151;letter-spacing:0.6px;white-space:pre;">Progress</div>
    <div class="abs" style="right:802px;top:268.7px;font-size:24px;line-height:30px;font-weight:700;color:#111827;letter-spacing:1.6px;white-space:pre;">45%</div>
    <div class="abs " style="left:1162px;top:331.6px;width:508px;height:72.6px;border-radius:28px;background:#000;color:#fff;font-size:28px;line-height:72px;text-align:center;letter-spacing:.85px;">View details</div>
    <div class="abs " style="left:1871px;top:-148px;width:459px;height:259px;border-radius:28px;border:1.5px solid #ecedf1;background:#fff;"></div>
    <div class="abs" style="left:1904px;top:8.8px;font-size:28px;line-height:35px;font-weight:700;color:#0a0a0c;letter-spacing:0.72px;white-space:pre;">On-time: 92%</div>
    <div class="abs " style="left:1904px;top:62px;width:392.5px;height:16px;border-radius:8px;background:#f0f0f2;"></div>
    <div class="abs " style="left:1904px;top:62px;width:361.7px;height:16px;border-radius:8px;background:#4f7fe9;"></div>
    <div class="abs " style="left:1871px;top:137px;width:459px;height:214px;border-radius:28px;border:1.5px solid #ecedf1;background:#fff;"></div>
    <div class="abs" style="left:1904px;top:169.9px;font-size:24px;line-height:30px;font-weight:400;color:#6b7280;letter-spacing:0.5px;white-space:pre;">Docs Valid</div>
    <div class="abs" style="left:1904px;top:212.8px;font-size:28px;line-height:35px;font-weight:700;color:#0a0a0c;letter-spacing:0.03px;white-space:pre;">Valid: 128 • Expiring: 7</div>
    <div class="abs " style="left:1904px;top:266.4px;width:106px;height:50.8px;border-radius:26px;border:1.5px solid #e6e7eb;background:#fff;font-size:24px;text-align:center;white-space:pre;line-height:47px;color:#2f7d3b;letter-spacing:.7px;">Valid</div>
    <div class="abs " style="left:2027.6px;top:266.4px;width:142.2px;height:50.8px;border-radius:26px;border:1.5px solid #e6e7eb;background:#fff;font-size:24px;text-align:center;white-space:pre;line-height:47px;color:#b45a1c;letter-spacing:.7px;">Expiring</div>
    <div class="abs " style="left:1871px;top:377px;width:459px;height:246px;border-radius:28px;border:1.5px solid #ecedf1;background:#fff;"></div>
    <div class="abs" style="left:1904px;top:411.0px;font-size:24px;line-height:30px;font-weight:400;color:#6b7280;letter-spacing:0.5px;white-space:pre;">Equipment</div>
    <div class="abs" style="left:1904px;top:452.4px;font-size:28px;line-height:35px;font-weight:700;color:#0a0a0c;letter-spacing:0.35px;white-space:pre;">Maintenance due: 3</div>
    <div class="abs " style="left:1905px;top:514.4px;width:391.5px;height:74.7px;border-radius:28px;border:2px solid #dcdde1;background:#fff;color:#000;font-size:28px;line-height:70px;text-align:center;letter-spacing:.8px;">Open equipment list</div>
    <div class="abs" style="left:715.5px;top:748.8px;font-size:28px;line-height:35px;font-weight:700;color:#0a0a0c;letter-spacing:0.03px;white-space:pre;">Daily Activity Log</div>
    <div class="abs " style="left:2026.3px;top:740px;width:121.3px;height:51.4px;border-radius:26px;border:1.5px solid #e6e7eb;background:#fff;font-size:24px;text-align:center;white-space:pre;line-height:48px;color:#6b7280;letter-spacing:.8px;">Today</div>
    <div class="abs " style="left:2164.6px;top:740px;width:165.4px;height:51.4px;border-radius:26px;border:1.5px solid #e6e7eb;background:#fff;font-size:24px;text-align:center;white-space:pre;line-height:48px;color:#6b7280;letter-spacing:.66px;">This week</div>
    <div class="abs " style="left:715.3px;top:824.5px;width:790.7px;height:454.5px;border-radius:28px;border:1.5px solid #ecedf1;background:#fff;"></div>
    <div class="abs " style="left:1539.7px;top:824.5px;width:790.3px;height:454.5px;border-radius:28px;border:1.5px solid #ecedf1;background:#fff;"></div>
    <div class="abs" style="left:749.7px;top:861.1px;font-size:28px;line-height:35px;font-weight:700;color:#0a0a0c;letter-spacing:-0.39px;white-space:pre;">Floor Slab</div>
    <div class="abs" style="left:749.7px;top:899.2px;font-size:24px;line-height:30px;font-weight:400;color:#6b7280;letter-spacing:0.46px;white-space:pre;">Project Manager — Eng.</div>
    <div class="abs" style="left:749.7px;top:931.0px;font-size:24px;line-height:30px;font-weight:400;color:#6b7280;letter-spacing:0.46px;white-space:pre;">Rahim</div>
    <div class="abs " style="left:1115.5px;top:858.5px;width:356.1px;height:82.8px;border-radius:42px;border:1.5px solid #e6e7eb;background:#fff;"></div>
    <div class="abs" style="left:1141px;top:868.3px;font-size:24px;line-height:30px;font-weight:400;color:#000;letter-spacing:0.75px;white-space:pre;">Habiganj 9746tr —</div>
    <div class="abs" style="left:1141px;top:900.7px;font-size:24px;line-height:30px;font-weight:400;color:#000;letter-spacing:0.75px;white-space:pre;">Ongoing</div>
    <div class="abs" style="left:749.7px;top:996.0px;font-size:28px;line-height:35px;font-weight:700;color:#0a0a0c;letter-spacing:0.14px;white-space:pre;">Concrete pouring completed for 2nd floor slab</div>
    <div class="abs" style="left:749.7px;top:1050.2px;font-size:24px;line-height:30px;font-weight:400;color:#4b5563;letter-spacing:0.63px;white-space:pre;">— Ensure rebar spacing matches BOQ specification.</div>
    <div class="abs" style="left:749.7px;top:1090.0px;font-size:24px;line-height:30px;font-weight:400;color:#4b5563;letter-spacing:0.82px;white-space:pre;">— Check curing process for foundation concrete.</div>
    <div class="abs" style="left:749.7px;top:1129.8px;font-size:24px;line-height:30px;font-weight:400;color:#4b5563;letter-spacing:0.78px;white-space:pre;">— Verify column alignment before pouring.</div>
    <div class="abs" style="left:749.7px;top:1204.2px;font-size:24px;line-height:30px;font-weight:400;color:#6b7280;letter-spacing:0.32px;white-space:pre;">Sep 17, 2025 — 06:45 PM</div>
    <div class="abs " style="left:1283.8px;top:1194.3px;width:187.8px;height:51.2px;border-radius:26px;border:1.5px solid #e6e7eb;background:#fff;font-size:24px;text-align:center;white-space:pre;line-height:48px;color:#6b7280;"><svg width="30" height="24" viewBox="0 0 30 24" style="position:absolute;left:25px;top:13px"><rect x="0" y="4" width="30" height="20" rx="3" fill="#3a3a3c"/><rect x="0" y="4" width="30" height="5" rx="2" fill="#8e8e93"/><rect x="4" y="1" width="8" height="4" rx="1" fill="#6b6b70"/><circle cx="16" cy="15" r="7" fill="#1c1c1e" stroke="#aeaeb2" stroke-width="1.500"/><circle cx="16" cy="15" r="3.500" fill="#48484a"/><rect x="24" y="6" width="4" height="2.500" rx="1" fill="#f5d04a"/></svg><span style="position:absolute;left:64px;top:0;letter-spacing:.75px">2 photos</span></div>
    <div class="abs" style="left:1573.5px;top:861.1px;font-size:28px;line-height:35px;font-weight:700;color:#0a0a0c;letter-spacing:0.45px;white-space:pre;">Safety Meeting</div>
    <div class="abs" style="left:1573.5px;top:899.2px;font-size:24px;line-height:30px;font-weight:400;color:#6b7280;letter-spacing:0.66px;white-space:pre;">Supervisor — T. Coleman</div>
    <div class="abs " style="left:1931.2px;top:858.3px;width:365.3px;height:51.2px;border-radius:26px;border:1.5px solid #e6e7eb;background:#fff;font-size:24px;text-align:center;white-space:pre;line-height:48px;color:#000;letter-spacing:.73px;">Kukatata wt46tr — Ongoing</div>
    <div class="abs" style="left:1573.5px;top:964.5px;font-size:28px;line-height:35px;font-weight:700;color:#0a0a0c;letter-spacing:0.14px;white-space:pre;">Toolbox talk completed (PPE + ladder safety)</div>
    <div class="abs" style="left:1573.5px;top:1019.7px;font-size:24px;line-height:30px;font-weight:400;color:#4b5563;letter-spacing:0.74px;white-space:pre;">— Attendance captured with GPS check-in.</div>
    <div class="abs" style="left:1573.5px;top:1059.5px;font-size:24px;line-height:30px;font-weight:400;color:#4b5563;letter-spacing:0.6px;white-space:pre;">— PPE checklist verified (helmets, vests).</div>
    <div class="abs" style="left:1573.5px;top:1099.3px;font-size:24px;line-height:30px;font-weight:400;color:#4b5563;letter-spacing:0.8px;white-space:pre;">— Hazards documented with photo proof.</div>
    <div class="abs" style="left:1573.5px;top:1172.9px;font-size:24px;line-height:30px;font-weight:400;color:#6b7280;letter-spacing:0.32px;white-space:pre;">Sep 17, 2025 — 08:10 AM</div>
    <div class="abs " style="left:2083.6px;top:1162.7px;width:212.9px;height:50.1px;border-radius:26px;border:1.5px solid #e6e7eb;background:#fff;font-size:24px;text-align:center;white-space:pre;line-height:47px;color:#6b7280;"><svg width="30" height="30" viewBox="0 0 30 30" style="position:absolute;left:25px;top:9px"><rect width="30" height="30" rx="5.500" fill="#3bb54a"/><path d="M7 15.500l5.500 6L23 8.500" fill="none" stroke="#fff" stroke-width="4.200" stroke-linecap="round" stroke-linejoin="round"/></svg><span style="position:absolute;left:63px;top:0;letter-spacing:.7px">Completed</span></div>
    <div class="abs" style="left:681px;top:1354.7px;font-size:24px;line-height:30px;font-weight:400;color:#6b7280;letter-spacing:0.75px;white-space:pre;">ComplianceShield Portal • Premium UI preview • Replace text/data with live backend later.</div>
    <div class="abs " style="left:2454px;top:767px;width:10px;height:745px;border-radius:5px;background:#7e7e82;"></div>
    <!--/PAGE-->
  </div>
  <div class="ring" style="box-shadow:inset 0 0 0 1.500px rgba(255,255,255,.30)"></div>
</div>

<!-- DOCK -->
<div id="dock">
  <!--DOCK-->
  <svg class="abs" style="left:15.5px;top:21.5px" width="71" height="71" viewBox="0 0 72 72"><defs><linearGradient id="gfi" x1="0" y1="0" x2="0" y2="1"><stop offset="0" stop-color="#27b4fb"/><stop offset="1" stop-color="#1b63ee"/></linearGradient><linearGradient id="gfi2" x1="0" y1="0" x2="0" y2="1"><stop offset="0" stop-color="#f2f7fd"/><stop offset="1" stop-color="#a4c6f6"/></linearGradient><clipPath id="cfi"><rect width="72" height="72" rx="16.5"/></clipPath></defs><rect width="72" height="72" rx="16.5" fill="url(#gfi)" /><g clip-path="url(#cfi)"><path fill="url(#gfi2)" d="M40 3h22c4 0 7 3 7 7v49c0 5-4 9-9 9H44c-5 0-8-4-8-9V41h-7c3-14 6-27 11-38z"/></g><path d="M18 23.500v6M50.500 23.500v6" stroke="#1d1d1f" stroke-width="2.400" stroke-linecap="round"/><path d="M14 48c12 10 30 10 42-1" fill="none" stroke="#1d1d1f" stroke-width="2.400" stroke-linecap="round"/></svg>
  <i class="abs" style="left:47px;top:99px;width:8px;height:8px;border-radius:50%;background:rgba(235,245,245,.85)"></i>
  <svg class="abs" style="left:107.5px;top:21.5px" width="71" height="71" viewBox="0 0 72 72"><defs><linearGradient id="gla" x1="0" y1="0" x2="0" y2="1"><stop offset="0" stop-color="#fbfbfc"/><stop offset="1" stop-color="#ececee"/></linearGradient></defs><rect width="72" height="72" rx="16.5" fill="url(#gla)" /><rect x="11" y="13" width="50" height="14" rx="7" fill="#b9b9bd"/><circle cx="18.500" cy="19.500" r="3" fill="none" stroke="#fff" stroke-width="1.300"/><path d="M20.700 21.700l2.300 2.300" stroke="#fff" stroke-width="1.300"/><rect x="14" y="32" width="11.500" height="11.500" rx="3" fill="#fb9a3c"/><rect x="31" y="32" width="11.500" height="11.500" rx="3" fill="#f255a8"/><rect x="48" y="32" width="11.500" height="11.500" rx="3" fill="#3fcf9a"/><rect x="14" y="48" width="11.500" height="11.500" rx="3" fill="#d79af5"/><rect x="31" y="48" width="11.500" height="11.500" rx="3" fill="#6fc0fb"/><rect x="48" y="48" width="11.500" height="11.500" rx="3" fill="#b4b4b7"/></svg>
  <svg class="abs" style="left:199.5px;top:21.5px" width="71" height="71" viewBox="0 0 72 72"><defs><linearGradient id="gsa" x1="0" y1="0" x2="0" y2="1"><stop offset="0" stop-color="#5fcafa"/><stop offset="1" stop-color="#2563ee"/></linearGradient><linearGradient id="gsb" x1="0" y1="0" x2="0" y2="1"><stop offset="0" stop-color="#ffffff"/><stop offset="1" stop-color="#ececee"/></linearGradient></defs><rect width="72" height="72" rx="16.5" fill="url(#gsb)" /><circle cx="36" cy="36" r="29" fill="url(#gsa)"/><path d="M36 9.500v4" stroke="#fff" stroke-width="1" opacity=".85" transform="rotate(0.0 36 36)"/><path d="M36 9.500v2.5" stroke="#fff" stroke-width="1" opacity=".85" transform="rotate(7.5 36 36)"/><path d="M36 9.500v4" stroke="#fff" stroke-width="1" opacity=".85" transform="rotate(15.0 36 36)"/><path d="M36 9.500v2.5" stroke="#fff" stroke-width="1" opacity=".85" transform="rotate(22.5 36 36)"/><path d="M36 9.500v4" stroke="#fff" stroke-width="1" opacity=".85" transform="rotate(30.0 36 36)"/><path d="M36 9.500v2.5" stroke="#fff" stroke-width="1" opacity=".85" transform="rotate(37.5 36 36)"/><path d="M36 9.500v4" stroke="#fff" stroke-width="1" opacity=".85" transform="rotate(45.0 36 36)"/><path d="M36 9.500v2.5" stroke="#fff" stroke-width="1" opacity=".85" transform="rotate(52.5 36 36)"/><path d="M36 9.500v4" stroke="#fff" stroke-width="1" opacity=".85" transform="rotate(60.0 36 36)"/><path d="M36 9.500v2.5" stroke="#fff" stroke-width="1" opacity=".85" transform="rotate(67.5 36 36)"/><path d="M36 9.500v4" stroke="#fff" stroke-width="1" opacity=".85" transform="rotate(75.0 36 36)"/><path d="M36 9.500v2.5" stroke="#fff" stroke-width="1" opacity=".85" transform="rotate(82.5 36 36)"/><path d="M36 9.500v4" stroke="#fff" stroke-width="1" opacity=".85" transform="rotate(90.0 36 36)"/><path d="M36 9.500v2.5" stroke="#fff" stroke-width="1" opacity=".85" transform="rotate(97.5 36 36)"/><path d="M36 9.500v4" stroke="#fff" stroke-width="1" opacity=".85" transform="rotate(105.0 36 36)"/><path d="M36 9.500v2.5" stroke="#fff" stroke-width="1" opacity=".85" transform="rotate(112.5 36 36)"/><path d="M36 9.500v4" stroke="#fff" stroke-width="1" opacity=".85" transform="rotate(120.0 36 36)"/><path d="M36 9.500v2.5" stroke="#fff" stroke-width="1" opacity=".85" transform="rotate(127.5 36 36)"/><path d="M36 9.500v4" stroke="#fff" stroke-width="1" opacity=".85" transform="rotate(135.0 36 36)"/><path d="M36 9.500v2.5" stroke="#fff" stroke-width="1" opacity=".85" transform="rotate(142.5 36 36)"/><path d="M36 9.500v4" stroke="#fff" stroke-width="1" opacity=".85" transform="rotate(150.0 36 36)"/><path d="M36 9.500v2.5" stroke="#fff" stroke-width="1" opacity=".85" transform="rotate(157.5 36 36)"/><path d="M36 9.500v4" stroke="#fff" stroke-width="1" opacity=".85" transform="rotate(165.0 36 36)"/><path d="M36 9.500v2.5" stroke="#fff" stroke-width="1" opacity=".85" transform="rotate(172.5 36 36)"/><path d="M36 9.500v4" stroke="#fff" stroke-width="1" opacity=".85" transform="rotate(180.0 36 36)"/><path d="M36 9.500v2.5" stroke="#fff" stroke-width="1" opacity=".85" transform="rotate(187.5 36 36)"/><path d="M36 9.500v4" stroke="#fff" stroke-width="1" opacity=".85" transform="rotate(195.0 36 36)"/><path d="M36 9.500v2.5" stroke="#fff" stroke-width="1" opacity=".85" transform="rotate(202.5 36 36)"/><path d="M36 9.500v4" stroke="#fff" stroke-width="1" opacity=".85" transform="rotate(210.0 36 36)"/><path d="M36 9.500v2.5" stroke="#fff" stroke-width="1" opacity=".85" transform="rotate(217.5 36 36)"/><path d="M36 9.500v4" stroke="#fff" stroke-width="1" opacity=".85" transform="rotate(225.0 36 36)"/><path d="M36 9.500v2.5" stroke="#fff" stroke-width="1" opacity=".85" transform="rotate(232.5 36 36)"/><path d="M36 9.500v4" stroke="#fff" stroke-width="1" opacity=".85" transform="rotate(240.0 36 36)"/><path d="M36 9.500v2.5" stroke="#fff" stroke-width="1" opacity=".85" transform="rotate(247.5 36 36)"/><path d="M36 9.500v4" stroke="#fff" stroke-width="1" opacity=".85" transform="rotate(255.0 36 36)"/><path d="M36 9.500v2.5" stroke="#fff" stroke-width="1" opacity=".85" transform="rotate(262.5 36 36)"/><path d="M36 9.500v4" stroke="#fff" stroke-width="1" opacity=".85" transform="rotate(270.0 36 36)"/><path d="M36 9.500v2.5" stroke="#fff" stroke-width="1" opacity=".85" transform="rotate(277.5 36 36)"/><path d="M36 9.500v4" stroke="#fff" stroke-width="1" opacity=".85" transform="rotate(285.0 36 36)"/><path d="M36 9.500v2.5" stroke="#fff" stroke-width="1" opacity=".85" transform="rotate(292.5 36 36)"/><path d="M36 9.500v4" stroke="#fff" stroke-width="1" opacity=".85" transform="rotate(300.0 36 36)"/><path d="M36 9.500v2.5" stroke="#fff" stroke-width="1" opacity=".85" transform="rotate(307.5 36 36)"/><path d="M36 9.500v4" stroke="#fff" stroke-width="1" opacity=".85" transform="rotate(315.0 36 36)"/><path d="M36 9.500v2.5" stroke="#fff" stroke-width="1" opacity=".85" transform="rotate(322.5 36 36)"/><path d="M36 9.500v4" stroke="#fff" stroke-width="1" opacity=".85" transform="rotate(330.0 36 36)"/><path d="M36 9.500v2.5" stroke="#fff" stroke-width="1" opacity=".85" transform="rotate(337.5 36 36)"/><path d="M36 9.500v4" stroke="#fff" stroke-width="1" opacity=".85" transform="rotate(345.0 36 36)"/><path d="M36 9.500v2.5" stroke="#fff" stroke-width="1" opacity=".85" transform="rotate(352.5 36 36)"/><path fill="#fff" d="M54 17L32.500 32.500 18 55l21.500-15.500z"/><path fill="#f5343b" d="M54 17L32.500 32.500l7 7z"/></svg>
  <i class="abs" style="left:231px;top:99px;width:8px;height:8px;border-radius:50%;background:rgba(235,245,245,.85)"></i>
  <svg class="abs" style="left:291.5px;top:21.5px" width="71" height="71" viewBox="0 0 72 72"><defs><linearGradient id="gch" x1="0" y1="0" x2="0" y2="1"><stop offset="0" stop-color="#ececec"/><stop offset="1" stop-color="#d2d2d2"/></linearGradient></defs><rect width="72" height="72" rx="16.5" fill="url(#gch)" /><circle cx="36" cy="36" r="26.500" fill="#fff"/><path fill="#db4437" d="M36 9.500a26.500 26.500 0 0123 13.300H36a13.200 13.200 0 00-11.500 6.700L13.200 22.500A26.500 26.500 0 0136 9.500z"/><path fill="#0f9d58" d="M13.200 22.500l11.400 19.800a13.200 13.200 0 0011.500 6.700l-6.600 12.700A26.500 26.500 0 0113.200 22.500z"/><path fill="#ffcd40" d="M59 22.800a26.500 26.500 0 01-29.500 38.900L47.400 42.600a13.200 13.200 0 000-13.200 13 13 0 00-3.400-6.600z"/><circle cx="36" cy="36" r="12.300" fill="#fff"/><circle cx="36" cy="36" r="9.800" fill="#4285f4"/></svg>
  <i class="abs" style="left:323px;top:99px;width:8px;height:8px;border-radius:50%;background:rgba(235,245,245,.85)"></i>
  <svg class="abs" style="left:383.5px;top:21.5px" width="71" height="71" viewBox="0 0 72 72"><defs><linearGradient id="gms" x1="0" y1="0" x2="0" y2="1"><stop offset="0" stop-color="#72e47d"/><stop offset="1" stop-color="#36c24d"/></linearGradient><linearGradient id="gms2" x1="0" y1="0" x2="0" y2="1"><stop offset="0" stop-color="#f4fcf4"/><stop offset="1" stop-color="#c6efca"/></linearGradient></defs><rect width="72" height="72" rx="16.5" fill="url(#gms)" /><path fill="url(#gms2)" d="M36 12.500c15 0 26.500 9.500 26.500 21.200S51 55 36 55c-2.600 0-5.100-.3-7.500-.9-2.700 2.600-7 4.300-11.500 4.600 2.200-2.400 3.600-5.200 3.900-7.900C14 47.200 9.500 41 9.500 33.700c0-11.700 11.500-21.200 26.500-21.200z"/></svg>
  <i class="abs" style="left:415px;top:99px;width:8px;height:8px;border-radius:50%;background:rgba(235,245,245,.85)"></i>
  <svg class="abs" style="left:475.5px;top:21.5px" width="71" height="71" viewBox="0 0 72 72"><defs><linearGradient id="gma" x1="0" y1="0" x2="0" y2="1"><stop offset="0" stop-color="#6ab6fb"/><stop offset="1" stop-color="#2a62ea"/></linearGradient><linearGradient id="gma2" x1="0" y1="0" x2="0" y2="1"><stop offset="0" stop-color="#ffffff"/><stop offset="1" stop-color="#d4e6fd"/></linearGradient></defs><rect width="72" height="72" rx="16.5" fill="url(#gma)" /><rect x="8" y="18" width="56" height="37" rx="5.500" fill="url(#gma2)"/><path d="M9.500 20.500l22.500 19c2.300 1.900 5.700 1.900 8 0l22.500-19" fill="none" stroke="#9cc4f8" stroke-width="2"/><path d="M9.500 53l19.500-17M62.500 53L43 36" stroke="#b9d3f8" stroke-width="1.600"/></svg>
  <i class="abs" style="left:507px;top:99px;width:8px;height:8px;border-radius:50%;background:rgba(235,245,245,.85)"></i>
  <svg class="abs" style="left:567.5px;top:21.5px" width="71" height="71" viewBox="0 0 72 72"><defs><clipPath id="cmp"><rect width="72" height="72" rx="16.5"/></clipPath></defs><g clip-path="url(#cmp)"><rect width="72" height="72" fill="#6fd26e"/><path fill="#e9e7e2" d="M0 38l28-8 44 30v12H0z"/><path fill="#f3b6d6" d="M0 50l14-4 12 26H0z"/><path fill="#f9d24a" d="M44 72l8-16 20 10v6z"/><path fill="#9be29a" d="M50 0h22v30c-12-4-20-14-22-30z"/><path fill="none" stroke="#c7f2c6" stroke-width="3" d="M56 0c2 12 8 20 16 24"/><path d="M27 0v32" stroke="#3d8df5" stroke-width="13"/><path d="M27 0v32" stroke="#fff" stroke-width="2" stroke-dasharray="0"/><path d="M0 40l30-10 42 32" fill="none" stroke="#fff" stroke-width="5"/></g><circle cx="27" cy="44" r="17" fill="#fff"/><circle cx="27" cy="44" r="14" fill="#2f86f6"/><path fill="#fff" d="M27 33.500l8 19-8-4.500-8 4.500z"/></svg>
  <svg class="abs" style="left:659.5px;top:21.5px" width="71" height="71" viewBox="0 0 72 72"><defs><linearGradient id="gph" x1="0" y1="0" x2="0" y2="1"><stop offset="0" stop-color="#ffffff"/><stop offset="1" stop-color="#ededef"/></linearGradient></defs><rect width="72" height="72" rx="16.5" fill="url(#gph)" /><ellipse cx="36" cy="21" rx="8.200" ry="13.500" fill="#fb9f28" opacity=".9" transform="rotate(0 36 36)"/><ellipse cx="36" cy="21" rx="8.200" ry="13.500" fill="#f6cf2e" opacity=".9" transform="rotate(45 36 36)"/><ellipse cx="36" cy="21" rx="8.200" ry="13.500" fill="#a9d33c" opacity=".9" transform="rotate(90 36 36)"/><ellipse cx="36" cy="21" rx="8.200" ry="13.500" fill="#4ec786" opacity=".9" transform="rotate(135 36 36)"/><ellipse cx="36" cy="21" rx="8.200" ry="13.500" fill="#4fb0e8" opacity=".9" transform="rotate(180 36 36)"/><ellipse cx="36" cy="21" rx="8.200" ry="13.500" fill="#7a78e0" opacity=".9" transform="rotate(225 36 36)"/><ellipse cx="36" cy="21" rx="8.200" ry="13.500" fill="#c868d4" opacity=".9" transform="rotate(270 36 36)"/><ellipse cx="36" cy="21" rx="8.200" ry="13.500" fill="#f2577a" opacity=".9" transform="rotate(315 36 36)"/></svg>
  <svg class="abs" style="left:751.5px;top:21.5px" width="71" height="71" viewBox="0 0 72 72"><defs><linearGradient id="gft" x1="0" y1="0" x2="0" y2="1"><stop offset="0" stop-color="#74e57f"/><stop offset="1" stop-color="#38c34f"/></linearGradient></defs><rect width="72" height="72" rx="16.5" fill="url(#gft)" /><rect x="9" y="20.500" width="38" height="31" rx="8" fill="url(#gms2)"/><path fill="#dff6e1" d="M50 31.500l11-8c1.200-.8 2.500 0 2.500 1.300v22.400c0 1.300-1.300 2.100-2.500 1.300l-11-8z"/></svg>
  <svg class="abs" style="left:843.5px;top:21.5px" width="71" height="71" viewBox="0 0 72 72"><defs><linearGradient id="gca" x1="0" y1="0" x2="0" y2="1"><stop offset="0" stop-color="#ffffff"/><stop offset="1" stop-color="#f1f1f3"/></linearGradient></defs><rect width="72" height="72" rx="16.5" fill="url(#gca)" /><text x="36" y="22" text-anchor="middle" font-family="Liberation Sans,sans-serif" font-size="14.500" font-weight="700" fill="#f0433a">Sat</text><text x="35.500" y="61" text-anchor="middle" font-family="Liberation Sans,sans-serif" font-size="46" font-weight="400" fill="#1d1d1f" letter-spacing="-1.500">20</text></svg>
  <svg class="abs" style="left:935.5px;top:21.5px" width="71" height="71" viewBox="0 0 72 72"><defs><linearGradient id="gco" x1="0" y1="0" x2="0" y2="1"><stop offset="0" stop-color="#d8d2c8"/><stop offset="1" stop-color="#bdb7ac"/></linearGradient><clipPath id="cco"><rect width="72" height="72" rx="16.5"/></clipPath></defs><rect width="72" height="72" rx="16.5" fill="url(#gco)" /><g clip-path="url(#cco)"><rect x="63" y="0" width="9" height="18" fill="#3ea6f0"/><rect x="63" y="18" width="9" height="18" fill="#f59a23"/><rect x="63" y="36" width="9" height="18" fill="#f2c12e"/><rect x="63" y="54" width="9" height="18" fill="#53c35a"/><circle cx="32" cy="36" r="22" fill="#a9a39a"/><circle cx="32" cy="29" r="8.500" fill="#fff"/><path fill="#fff" d="M15.500 50.500c3-7 9.500-10 16.500-10s13.500 3 16.500 10a22 22 0 01-33 0z"/></g></svg>
  <svg class="abs" style="left:1027.5px;top:21.5px" width="71" height="71" viewBox="0 0 72 72"><defs><linearGradient id="gre" x1="0" y1="0" x2="0" y2="1"><stop offset="0" stop-color="#ffffff"/><stop offset="1" stop-color="#f0f0f2"/></linearGradient></defs><rect width="72" height="72" rx="16.5" fill="url(#gre)" /><circle cx="15" cy="18" r="4.200" fill="#3c82f6"/><circle cx="15" cy="36" r="4.200" fill="#f0524a"/><circle cx="15" cy="54" r="4.200" fill="#f7a531"/><path d="M26 18h36M26 36h36M26 54h36" stroke="#d2d2d6" stroke-width="1.800"/></svg>
  <svg class="abs" style="left:1119.5px;top:21.5px" width="71" height="71" viewBox="0 0 72 72"><defs><linearGradient id="gno" x1="0" y1="0" x2="0" y2="1"><stop offset="0" stop-color="#ffffff"/><stop offset="1" stop-color="#f0f0f2"/></linearGradient><clipPath id="cno"><rect width="72" height="72" rx="16.5"/></clipPath></defs><rect width="72" height="72" rx="16.5" fill="url(#gno)" /><g clip-path="url(#cno)"><rect width="72" height="19" fill="#fbd44a"/></g><path d="M6 21h60" stroke="#d8c27a" stroke-width="1" stroke-dasharray="1.500 2"/><path d="M10 36h52M10 53h52" stroke="#d6d6da" stroke-width="1.800"/></svg>
  <svg class="abs" style="left:1211.5px;top:21.5px" width="71" height="71" viewBox="0 0 72 72"><defs><linearGradient id="gfr" x1="0" y1="0" x2="0" y2="1"><stop offset="0" stop-color="#ffffff"/><stop offset="1" stop-color="#f0f0f2"/></linearGradient></defs><rect width="72" height="72" rx="16.5" fill="url(#gfr)" /><circle cx="27" cy="45" r="19" fill="#f4683a"/><rect x="24" y="10" width="38" height="27" rx="7" fill="#3ec0f3"/><path d="M14 46c4-14 12-22 17-20s-1 17 5 17 6-16 11-15 2 12 7 12 7-6 10-7" fill="none" stroke="#1f3b4a" stroke-width="3.300" stroke-linecap="round"/></svg>
  <svg class="abs" style="left:1303.5px;top:21.5px" width="71" height="71" viewBox="0 0 72 72"><rect width="72" height="72" rx="16.5" fill="#1b1b1d" /><g transform="translate(8 22) scale(.026)"><path fill="#fff" d="M788 341c-6 4-108 62-108 190 0 148 130 201 134 202-1 3-21 72-69 142-43 62-88 124-156 124s-86-40-165-40c-77 0-104 41-167 41s-106-57-156-127C43 790 0 663 0 542c0-194 126-297 250-297 66 0 121 43 162 43 39 0 101-46 176-46 28 0 130 3 197 99zM554 159c31-37 53-88 53-139 0-7-1-14-2-20-50 2-110 33-146 75-28 32-55 83-55 135 0 8 1 16 2 18 3 1 8 2 13 2 45 0 102-30 135-71z"/></g><text x="33" y="46" font-family="Liberation Sans,sans-serif" font-size="29" font-weight="700" fill="#fff" letter-spacing="-1">tv</text></svg>
  <svg class="abs" style="left:1395.5px;top:21.5px" width="71" height="71" viewBox="0 0 72 72"><defs><linearGradient id="gmu" x1="0" y1="0" x2="0" y2="1"><stop offset="0" stop-color="#fb5b72"/><stop offset="1" stop-color="#f5253c"/></linearGradient></defs><rect width="72" height="72" rx="16.5" fill="url(#gmu)" /><path fill="#fff" d="M28 19.500l24-5.500v30.500a7 7 0 11-4-6.300V24l-16 3.700v21.800a7 7 0 11-4-6.300z"/></svg>
  <svg class="abs" style="left:1487.5px;top:21.5px" width="71" height="71" viewBox="0 0 72 72"><defs><linearGradient id="gne" x1="0" y1="0" x2="0" y2="1"><stop offset="0" stop-color="#ffffff"/><stop offset="1" stop-color="#f0f0f2"/></linearGradient><clipPath id="cne"><rect x="13" y="13" width="46" height="46" rx="7"/></clipPath></defs><rect width="72" height="72" rx="16.5" fill="url(#gne)" /><g clip-path="url(#cne)"><path fill="#f5405a" d="M13 13h20l26 26v20H39L13 33z"/><path fill="#fa8a9b" d="M13 40l19 19H13zM59 32L40 13h19z"/></g></svg>
  <svg class="abs" style="left:1579.5px;top:21.5px" width="71" height="71" viewBox="0 0 72 72"><defs><linearGradient id="gke" x1="0" y1="0" x2="0" y2="1"><stop offset="0" stop-color="#47a6f9"/><stop offset="1" stop-color="#1a5fe8"/></linearGradient></defs><rect width="72" height="72" rx="16.5" fill="url(#gke)" /><path fill="#fff" d="M17 27l5-14h28l5 14z"/><path fill="#dfe9f8" d="M15 27h42v5H15z"/><circle cx="36" cy="19.500" r="5" fill="#f2b632"/><path d="M36 19.500V14.500a5 5 0 015 5z" fill="#e8484a"/><path d="M36 19.500h5a5 5 0 01-2.500 4.300z" fill="#56b757"/><path d="M36 32v26" stroke="#e9eef8" stroke-width="3"/><path d="M26 59h20" stroke="#e9eef8" stroke-width="3" stroke-linecap="round"/></svg>
  <svg class="abs" style="left:1671.5px;top:21.5px" width="71" height="71" viewBox="0 0 72 72"><defs><linearGradient id="gnu" x1="0" y1="0" x2="0" y2="1"><stop offset="0" stop-color="#6fdd6e"/><stop offset="1" stop-color="#31b94b"/></linearGradient></defs><rect width="72" height="72" rx="16.5" fill="url(#gnu)" /><rect x="12" y="46" width="9" height="15" rx="2" fill="#fff"/><rect x="25" y="33" width="9" height="28" rx="2" fill="#fff"/><rect x="38" y="12" width="9" height="49" rx="2" fill="#fff"/><rect x="51" y="25" width="9" height="36" rx="2" fill="#fff"/></svg>
  <i class="abs" style="left:1703px;top:99px;width:8px;height:8px;border-radius:50%;background:rgba(235,245,245,.85)"></i>
  <svg class="abs" style="left:1763.5px;top:21.5px" width="71" height="71" viewBox="0 0 72 72"><defs><linearGradient id="gpa" x1="0" y1="0" x2="0" y2="1"><stop offset="0" stop-color="#fbb041"/><stop offset="1" stop-color="#f48a1c"/></linearGradient></defs><rect width="72" height="72" rx="16.5" fill="url(#gpa)" /><path d="M11 61h50" stroke="#ffd9a0" stroke-width="1.800"/><path fill="#fff" d="M13 58l4-10L52 13c2-2 5-2 7 0s2 5 0 7L24 55z"/><path fill="#e8e2d6" d="M13 58l4-10 7 7z"/><path d="M47 18l7 7" stroke="#d9d3c6" stroke-width="1.500"/></svg>
  <svg class="abs" style="left:1855.5px;top:21.5px" width="71" height="71" viewBox="0 0 72 72"><defs><linearGradient id="gas" x1="0" y1="0" x2="0" y2="1"><stop offset="0" stop-color="#3fb3fb"/><stop offset="1" stop-color="#1a5fea"/></linearGradient></defs><rect width="72" height="72" rx="16.5" fill="url(#gas)" /><g stroke="#fff" stroke-width="6" stroke-linecap="round" fill="none"><path d="M36 17L20 48"/><path d="M36 17l16 31" /><path d="M14 44h24M46 44h12" stroke-opacity=".8"/></g></svg>
  <svg class="abs" style="left:1947.5px;top:21.5px" width="71" height="71" viewBox="0 0 72 72"><defs><linearGradient id="gse" x1="0" y1="0" x2="0" y2="1"><stop offset="0" stop-color="#9c9ca1"/><stop offset="1" stop-color="#6b6b70"/></linearGradient></defs><rect width="72" height="72" rx="16.5" fill="url(#gse)" /><rect x="34" y="6.500" width="4" height="6" rx=".8" fill="#d9d9dc" transform="rotate(0 36 36)"/><rect x="34" y="6.500" width="4" height="6" rx=".8" fill="#d9d9dc" transform="rotate(15 36 36)"/><rect x="34" y="6.500" width="4" height="6" rx=".8" fill="#d9d9dc" transform="rotate(30 36 36)"/><rect x="34" y="6.500" width="4" height="6" rx=".8" fill="#d9d9dc" transform="rotate(45 36 36)"/><rect x="34" y="6.500" width="4" height="6" rx=".8" fill="#d9d9dc" transform="rotate(60 36 36)"/><rect x="34" y="6.500" width="4" height="6" rx=".8" fill="#d9d9dc" transform="rotate(75 36 36)"/><rect x="34" y="6.500" width="4" height="6" rx=".8" fill="#d9d9dc" transform="rotate(90 36 36)"/><rect x="34" y="6.500" width="4" height="6" rx=".8" fill="#d9d9dc" transform="rotate(105 36 36)"/><rect x="34" y="6.500" width="4" height="6" rx=".8" fill="#d9d9dc" transform="rotate(120 36 36)"/><rect x="34" y="6.500" width="4" height="6" rx=".8" fill="#d9d9dc" transform="rotate(135 36 36)"/><rect x="34" y="6.500" width="4" height="6" rx=".8" fill="#d9d9dc" transform="rotate(150 36 36)"/><rect x="34" y="6.500" width="4" height="6" rx=".8" fill="#d9d9dc" transform="rotate(165 36 36)"/><rect x="34" y="6.500" width="4" height="6" rx=".8" fill="#d9d9dc" transform="rotate(180 36 36)"/><rect x="34" y="6.500" width="4" height="6" rx=".8" fill="#d9d9dc" transform="rotate(195 36 36)"/><rect x="34" y="6.500" width="4" height="6" rx=".8" fill="#d9d9dc" transform="rotate(210 36 36)"/><rect x="34" y="6.500" width="4" height="6" rx=".8" fill="#d9d9dc" transform="rotate(225 36 36)"/><rect x="34" y="6.500" width="4" height="6" rx=".8" fill="#d9d9dc" transform="rotate(240 36 36)"/><rect x="34" y="6.500" width="4" height="6" rx=".8" fill="#d9d9dc" transform="rotate(255 36 36)"/><rect x="34" y="6.500" width="4" height="6" rx=".8" fill="#d9d9dc" transform="rotate(270 36 36)"/><rect x="34" y="6.500" width="4" height="6" rx=".8" fill="#d9d9dc" transform="rotate(285 36 36)"/><rect x="34" y="6.500" width="4" height="6" rx=".8" fill="#d9d9dc" transform="rotate(300 36 36)"/><rect x="34" y="6.500" width="4" height="6" rx=".8" fill="#d9d9dc" transform="rotate(315 36 36)"/><rect x="34" y="6.500" width="4" height="6" rx=".8" fill="#d9d9dc" transform="rotate(330 36 36)"/><rect x="34" y="6.500" width="4" height="6" rx=".8" fill="#d9d9dc" transform="rotate(345 36 36)"/><circle cx="36" cy="36" r="23" fill="none" stroke="#d9d9dc" stroke-width="4.500"/><circle cx="36" cy="36" r="15.500" fill="none" stroke="#d9d9dc" stroke-width="2"/><g stroke="#d9d9dc" stroke-width="3.200" stroke-linecap="round"><path d="M36 36V20.500M36 36l13.400 7.800M36 36l-13.400 7.800"/></g><circle cx="36" cy="36" r="3.800" fill="#d9d9dc"/></svg>
  <i class="abs" style="left:1979px;top:99px;width:8px;height:8px;border-radius:50%;background:rgba(235,245,245,.85)"></i>
  <svg class="abs" style="left:2039.5px;top:21.5px" width="71" height="71" viewBox="0 0 72 72"><rect width="72" height="72" rx="16.5" fill="#17130f" /><path fill="#f3f2f0" d="M36 36l20-12v24L36 61z"/><path fill="#85837f" d="M36 36L16 24v24l20 13z"/><path fill="#5e5c59" d="M36 11l20 13-20 12-20-12z"/><path fill="#a9a7a3" d="M36 11l20 13-20 4z"/></svg>
  <svg class="abs" style="left:2173.5px;top:21.5px" width="71" height="71" viewBox="0 0 72 72"><defs><linearGradient id="gte" x1="0" y1="0" x2="0" y2="1"><stop offset="0" stop-color="#ffffff"/><stop offset="1" stop-color="#ededef"/></linearGradient></defs><rect width="72" height="72" rx="16.5" fill="url(#gte)" /><path d="M0 19h72M0 36h72M0 53h72" stroke="#cfcfd3" stroke-width="1.600"/><path d="M18 0v72" stroke="#f08a8a" stroke-width="1.600"/></svg>
  <i class="abs" style="left:2205px;top:99px;width:8px;height:8px;border-radius:50%;background:rgba(235,245,245,.85)"></i>
  <svg class="abs" style="left:2265.5px;top:21.5px" width="71" height="71" viewBox="0 0 72 72"><defs><linearGradient id="gpr" x1="0" y1="0" x2="0" y2="1"><stop offset="0" stop-color="#b9d1ff"/><stop offset="1" stop-color="#3f76f6"/></linearGradient></defs><rect width="72" height="72" rx="16.5" fill="url(#gpr)" /><path fill="#bfe0ff" opacity=".75" d="M21 33h30l7 22c-6 5-38 5-44 0z"/><ellipse cx="36" cy="52" rx="11" ry="5" fill="#dceeff" opacity=".7"/><path fill="#2b2b2f" d="M18 18c0-6 36-6 36 0v14c0 6-36 6-36 0z"/><ellipse cx="36" cy="18" rx="18" ry="7.500" fill="#3b3b40"/><ellipse cx="36" cy="18" rx="12" ry="4.800" fill="#2e8fd6"/><ellipse cx="36" cy="17" rx="8" ry="2.800" fill="#6cc6f2"/></svg>
  <i class="abs" style="left:2297px;top:99px;width:8px;height:8px;border-radius:50%;background:rgba(235,245,245,.85)"></i>
  <svg class="abs" style="left:2357.5px;top:21.5px" width="71" height="71" viewBox="0 0 72 72"><defs><linearGradient id="gpn" x1="0" y1="0" x2="0" y2="1"><stop offset="0" stop-color="#7de98a"/><stop offset="1" stop-color="#45c557"/></linearGradient></defs><rect width="72" height="72" rx="16.5" fill="url(#gpn)" /><path fill="#fff" opacity=".95" d="M22.500 14.500c1.500-1.500 4-1.300 5.200.5l4.300 6.500c1 1.500.8 3.500-.5 4.800l-2.700 2.700c2.500 5.500 7.700 10.800 13.300 13.300l2.700-2.700c1.300-1.300 3.300-1.500 4.800-.5l6.500 4.300c1.800 1.200 2 3.700.5 5.200l-3 3c-2.600 2.600-6.600 3.200-9.900 1.600C31.500 47.500 24 40 18 28c-1.600-3.300-1-7.300 1.600-9.900z"/></svg>
  <svg class="abs" style="left:2491.5px;top:21.5px" width="71" height="71" viewBox="0 0 72 72"><defs><linearGradient id="gtr" x1="0" y1="0" x2="0" y2="1"><stop offset="0" stop-color="#eeeef0"/><stop offset="1" stop-color="#c4c5c9"/></linearGradient></defs><g transform="translate(36 36) scale(1.08) translate(-36 -37)"><path fill="#c9c9cd" d="M10 9l9-7 6 8z"/><path fill="#d8d8dc" d="M17 8l8-6 4 8z"/><path fill="#f2c234" d="M24 9l6-6 6 7z"/><path fill="#e6544a" d="M30 8l10-6 2 8z"/><path fill="#f08a3c" d="M34 9l6-4 4 4z"/><path fill="#7a5cf0" d="M38 6l10-3-3 8z"/><path fill="#3ca0f0" d="M47 8l9-6 3 9z"/><path fill="#5ac8e8" d="M52 9l6-5 3 6z"/><path fill="url(#gtr)" opacity=".9" d="M6 10h60l-6.500 58c-.3 2-2 3-4 3h-39c-2 0-3.700-1-4-3z"/><ellipse cx="36" cy="10" rx="30" ry="3.600" fill="none" stroke="#f4f4f6" stroke-width="1.800"/></g></svg>
  <i class="abs" style="left:2142.5px;top:17px;width:2px;height:82px;background:rgba(255,255,255,.38)"></i>
  <i class="abs" style="left:2459px;top:17px;width:2px;height:82px;background:rgba(255,255,255,.38)"></i>
  <div class="abs" style="left:1993px;top:13px;width:34px;height:34px;border-radius:50%;background:#ec4b41;color:#fff;font-size:21px;line-height:34px;text-align:center">1</div>
  <!--/DOCK-->
</div>
</body>
</html>
